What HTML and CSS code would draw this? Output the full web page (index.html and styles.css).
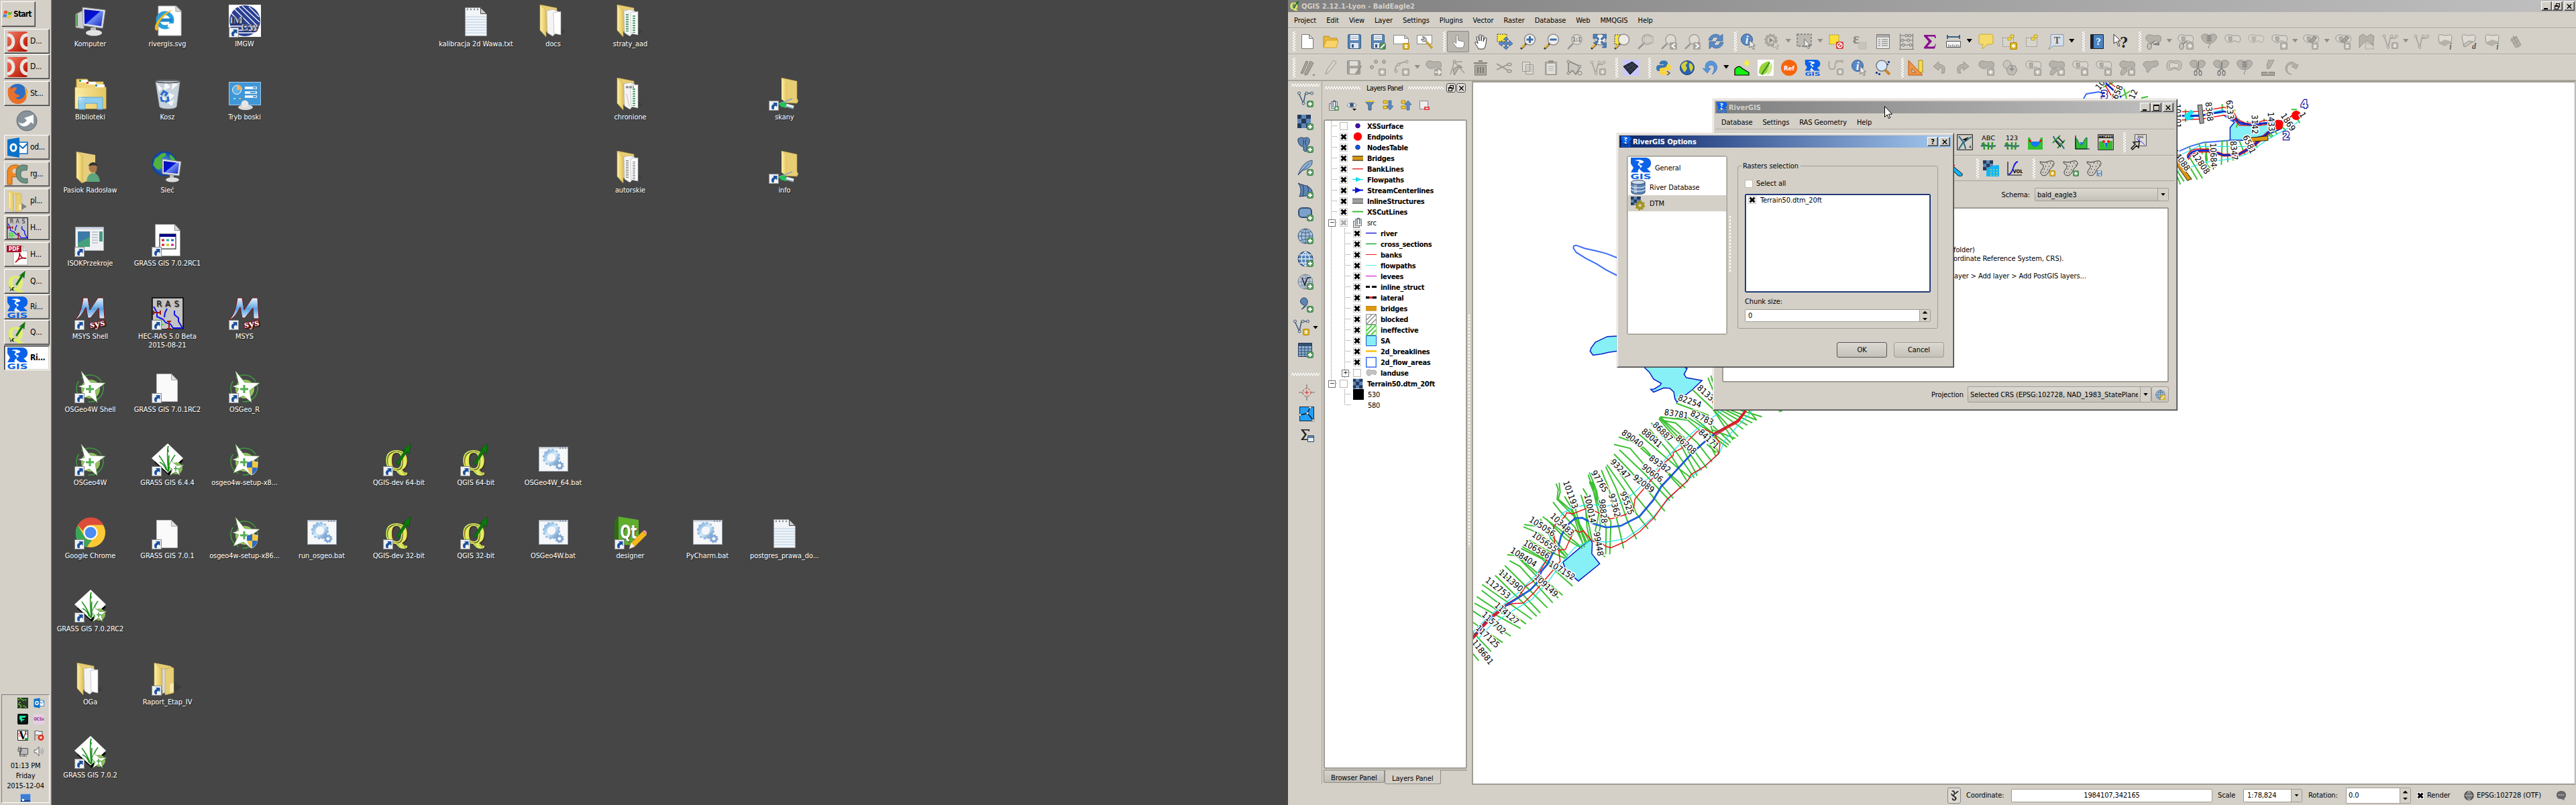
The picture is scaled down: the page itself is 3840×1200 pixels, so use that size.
FILE: index.html
```html
<!DOCTYPE html>
<html lang="en">
<head>
<meta charset="utf-8">
<title>Desktop</title>
<link rel="stylesheet" href="styles.css">
</head>
<body>
<svg class="defs" aria-hidden="true">
<defs>
<linearGradient id="gFold" x1="0" x2="1"><stop offset="0" stop-color="#fdf0a8"/><stop offset="1" stop-color="#e3c45c"/></linearGradient>
<linearGradient id="gScr" x1="0" y1="0" x2="1" y2="1"><stop offset="0" stop-color="#0a14a0"/><stop offset=".45" stop-color="#0010d8"/><stop offset=".5" stop-color="#6f8cf0"/><stop offset="1" stop-color="#1426c8"/></linearGradient>
<linearGradient id="gRed" x1="0" y1="0" x2="1" y2="1"><stop offset="0" stop-color="#ee7a6a"/><stop offset=".5" stop-color="#d8452c"/><stop offset="1" stop-color="#a80c00"/></linearGradient>
<linearGradient id="gM" x1="0" y1="0" x2="0" y2="1"><stop offset="0" stop-color="#e8f4ff"/><stop offset=".5" stop-color="#5aa0e0"/><stop offset="1" stop-color="#e8f4ff"/></linearGradient>
<radialGradient id="gGlobe"><stop offset="0" stop-color="#5ab0f8"/><stop offset="1" stop-color="#0a3ca0"/></radialGradient>
<linearGradient id="gGear" x1="0" y1="0" x2="1" y2="1"><stop offset="0" stop-color="#7fb2e0"/><stop offset=".5" stop-color="#d6ecfa"/><stop offset="1" stop-color="#6f9ccc"/></linearGradient>
</defs>

<!-- shared badges -->
<symbol id="bStar" viewBox="0 0 10 10"><rect x=".5" y=".5" width="9" height="9" rx="1" fill="#d8ac1c" stroke="#b48c10"/><path d="M5 2v6M2.4 3.5l5.2 3M2.4 6.5l5.2-3" stroke="#fff" stroke-width="1.3"/></symbol>
<symbol id="bPlus" viewBox="0 0 10 10"><rect x=".5" y=".5" width="9" height="9" rx="2" fill="#5a9c62" stroke="#3f8048"/><path d="M5 2v6M2 5h6" stroke="#fff" stroke-width="1.8"/></symbol>
<symbol id="bGrey" viewBox="0 0 10 10"><rect x=".5" y=".5" width="9" height="9" rx="1" fill="#b3b0a9" stroke="#a3a099"/><path d="M5 2v6M2.4 3.5l5.2 3M2.4 6.5l5.2-3" stroke="#f4f3f0" stroke-width="1.2"/></symbol>
<symbol id="bGreyX" viewBox="0 0 10 10"><rect x=".5" y=".5" width="9" height="9" rx="1" fill="#b3b0a9" stroke="#a3a099"/><path d="M3 3l4 4M7 3L3 7" stroke="#f4f3f0" stroke-width="1.6"/></symbol>
<symbol id="short" viewBox="0 0 15 15"><rect x=".5" y=".5" width="14" height="14" fill="#eef1f4" stroke="#8a8a8a"/><path d="M5 13C3 9 4 6 8 5L6 3h6.500v6.500L10.500 7.500C8 8.500 7 10 8 13z" fill="#1a4f9c"/></symbol>
<symbol id="river" viewBox="0 0 32 32"><path d="M1 0h22c10 0 11 14 2 16l6 6H1l4-7-4-6z" fill="#0a62e8"/><path d="M7 4c8-2 15 1 13 3s-8 1-6 3 6 2 3 4-5 3 3 8h-8c-2-4 3-5 3-8s-5-2-3-5 4-3-5-5z" fill="#fff"/><text x="16" y="32" font-size="10.500" text-anchor="middle" textLength="31" lengthAdjust="spacingAndGlyphs" class="logo" fill="#0a62e8">GIS</text></symbol>
<symbol id="qgis" viewBox="0 0 48 48"><text x="20" y="40" font-size="45" text-anchor="middle" textLength="34" lengthAdjust="spacingAndGlyphs" class="serif" fill="#e2f060" stroke="#e2f060" stroke-width="1.500">Q</text><path d="M20 30L33 9l-5 2L41 0l-2 16-3-4-13 20z" fill="#0a7a0a" stroke="#044a04" stroke-width=".6"/></symbol>
<symbol id="pole" viewBox="0 0 10 10"><path d="M0 2c3 2 3 3 4 6l2-4 4-1-3 3 2 4-4-2-3 2 1-4z" fill="#1a3a10"/></symbol>

<!-- desktop icons, 48px -->
<symbol id="dPc" viewBox="0 0 48 48"><path d="M2 14l12-6v28L2 34z" fill="#c9cdd0" stroke="#888"/><path d="M4 14v18" stroke="#3a3" stroke-width="2"/><path d="M12 4l34 4-4 27-29-4z" fill="#e4e6ea" stroke="#999"/><path d="M14.500 7l28.500 3-3 22-25-3.500z" fill="url(#gScr)"/><path d="M24 34h8v6h-8z" fill="#bbb"/><ellipse cx="29" cy="42" rx="12" ry="4.500" fill="#e2e2e2"/></symbol>
<symbol id="dIe" viewBox="0 0 48 48"><path d="M10 2h27l7 7v37H10z" fill="#fff" stroke="#bbb"/><path d="M36 2v8h8z" fill="#ddd" stroke="#999"/><circle cx="20" cy="23" r="10.500" fill="none" stroke="#2b9fdc" stroke-width="6"/><path d="M12 23h19" stroke="#1b86c8" stroke-width="5"/><path d="M24 28h10v6H24z" fill="#fff"/><path d="M6 38C0 30 20 8 32 8c-8 3-25 18-22 28-1 2-3 3-4 2z" fill="#f2b81c"/></symbol>
<symbol id="dImgw" viewBox="0 0 48 48"><path fill="#fff" d="M0 0h48v48H0z"/><circle cx="24" cy="24" r="23" fill="#2a3f92"/><path d="M8 6l34 34M14 3l30 30M20 2l26 24M3 12l22 22M30 3l15 15" stroke="#fff" stroke-width="1.300"/><path d="M3 32h43M5 38h38M9 42h30" stroke="#fff" stroke-width="1.500"/><text x="1" y="28" font-size="15" class="serif" fill="#fff" stroke="#2a3f92" stroke-width=".4">IM</text><text x="18" y="39" font-size="15" class="serif" fill="#fff" stroke="#2a3f92" stroke-width=".4">GW</text></symbol>
<symbol id="dLib" viewBox="0 0 48 48"><path d="M3 2h16l2 4h22v8h4v32H1V14h2z" fill="#efd277" stroke="#c9a545"/><path d="M7 3h12l2 4H7zM19 6h12l2 4H19zM31 10h14v4H31z" fill="#fff"/><path d="M7 3h3v3H7z" fill="#3a3"/><path d="M18 6h3v3h-3z" fill="#d33"/><path d="M31 10h3v3h-3z" fill="#38c"/><path d="M1 15h46v31H1z" fill="url(#gFold)" opacity=".85"/><path d="M6 29h36v18h-8V38H16v9H6z" fill="#8fcdf0" stroke="#5aa4d0"/><path d="M8 24v14M1 31h14M4 27l9 9M13 26l-9 9" stroke="#fff" opacity=".6"/></symbol>
<symbol id="dBin" viewBox="0 0 48 48"><path d="M6 5h36l-5 38c-2 4-23 4-25 0z" fill="#c7d2dc" stroke="#aab4bc"/><path d="M8 8l8 8-5 5zM20 5l8 9-10 5zM31 6l8 4-9 8zM13 26l9 5-8 6zM25 22l9 4-7 8zM22 36l12-3-4 9z" fill="#fff" opacity=".8"/><path d="M14 26l4-6 5 3-3 4M24 28l1 6-5 2M14 28l1 6 4 1" stroke="#2f6cd0" stroke-width="3.200" fill="none"/><ellipse cx="24" cy="5" rx="18" ry="2.500" fill="none" stroke="#555" stroke-width="1.500"/></symbol>
<symbol id="dPanel" viewBox="0 0 48 48"><rect x=".5" y="6.500" width="47" height="34" fill="#3f97d8" stroke="#9cc8ea"/><circle cx="12" cy="18" r="6.500" fill="#5cb0e4" stroke="#fff"/><path d="M12 18V10a8 8 0 0 1 8 8z" fill="#f6b064"/><path d="M24 15h18M24 22h18M24 28h18" stroke="#fff" stroke-width="3.500"/><path d="M36 15h5M32 22h8M36 28h5" stroke="#2b7fc0" stroke-width="1.500"/><path d="M7 31h3" stroke="#7fe" stroke-width="2"/><path d="M15 31h3" stroke="#fa6" stroke-width="2"/><ellipse cx="25" cy="44" rx="11" ry="4" fill="#d9d9d9"/><circle cx="24" cy="39" r="5.500" fill="#e6e6e6"/></symbol>
<symbol id="dUser" viewBox="0 0 48 48"><path d="M3 1l28 5v34l-20 8L3 40z" fill="#e6ce7c"/><path d="M3 1l9 6v41L3 40z" fill="url(#gFold)" stroke="#c9a545" stroke-width=".6"/><path d="M18 46c1-11 6-13 10-13s9 3 10 13z" fill="#5da57c"/><circle cx="28" cy="26" r="6.500" fill="#a8784c"/><path d="M21 23c1-8 13-8 14 0-3-2-10-2-14 0z" fill="#333"/><path d="M34 24v8" stroke="#444" stroke-width="1.500"/></symbol>
<symbol id="dNet" viewBox="0 0 48 48"><circle cx="19" cy="19" r="18.500" fill="url(#gGlobe)"/><path d="M5 11c8-3 8-9 15-8 6 5-6 6-6 11s5 7 0 12-9-2-12-5zM27 5c5 3 9 7 9 12-5 0-10-5-9-12z" fill="#4fb33c"/><path d="M16 12l28 4-3 21-25-3z" fill="#e4e6ea" stroke="#888"/><path d="M18 15l23 3-2 16-21-2z" fill="url(#gScr)"/><path d="M27 36h6v5h-6z" fill="#bbb"/><ellipse cx="31" cy="43" rx="10" ry="3.500" fill="#ddd"/></symbol>
<symbol id="dApp" viewBox="0 0 48 48"><rect x="1.500" y="4.500" width="42" height="35" fill="#eef0f2" stroke="#9aa4ae"/><path fill="#cfd8e4" d="M2 5h41v3H2z"/><path d="M5 11h18v23H5z" fill="#45a17a"/><path d="M5 11h18v8L5 28z" fill="#3d7aa8"/><path d="M26 12h9M26 16h9M26 20h9M26 24h9M26 28h9" stroke="#b9bfc6" stroke-width="1.500"/><path d="M37 11h5v15h-5z" fill="#4a9a88"/></symbol>
<symbol id="dExe" viewBox="0 0 48 48"><path d="M5.500.5h29l8 9v38h-37z" fill="#fff" stroke="#999"/><path d="M34.500.5v9h8z" fill="#ddd" stroke="#888"/><rect x="12" y="15" width="24" height="22" fill="#fff" stroke="#000"/><path fill="#000088" d="M12 15h24v4H12z"/><path d="M15 24h4M15 31h4" stroke="#c22" stroke-width="3"/><path d="M22 24h4" stroke="#2aa" stroke-width="3"/><path d="M29 24h4" stroke="#26c" stroke-width="3"/><path d="M22 31h4" stroke="#cb2" stroke-width="3"/><path d="M29 31h4" stroke="#c28" stroke-width="3"/></symbol>
<symbol id="dMsys" viewBox="0 0 48 48"><path d="M0 34c8-6 11-20 13-33h7l3 18L35 1h8l2 31h-8l-1-16-12 15h-4l-3-16C12 25 8 31 0 34z" fill="url(#gM)" stroke="#7a1010" stroke-width="1"/><text x="23" y="44" font-size="15" textLength="22" lengthAdjust="spacingAndGlyphs" class="serif" fill="#fff" stroke="#8a0c0c" stroke-width="2" paint-order="stroke" transform="rotate(-10 34 40)">sys</text></symbol>
<symbol id="dRas" viewBox="0 0 48 48"><rect x="1" y="1" width="46" height="47" fill="#c4c4c4" stroke="#000" stroke-width="1.500"/><text x="24" y="13.500" font-size="13" text-anchor="middle" textLength="34" class="sans" fill="#222">RAS</text><path d="M3 14l5 9v6l9 4 4 5 7 2 4 6h14l-6-10v-5l-6-5v-6M23 17l-3 6-1 7" fill="none" stroke="#1414e8" stroke-width="2"/><path d="M3 23h10M3 20v6M13 20v6M26 36v11M23 36h6M23 47h6" stroke="#a01414" stroke-width="2"/><path d="M4 36h12M4 41h14M7 33v13M12 33v13" stroke="#14e814" stroke-width="1.500"/></symbol>
<symbol id="dGeo" viewBox="0 0 48 48"><circle cx="23" cy="27" r="20" fill="none" stroke="#3f9a3f" stroke-width="1.500" stroke-dasharray="34 6"/><circle cx="24" cy="28" r="14" fill="#92c45c"/><path d="M10 1l14 17 22 1-15 11 3 18-12-10-15 6 8-17L6 24l9-3z" fill="#fff" stroke="#6a9c50" stroke-width=".7"/><path d="M23 22v12M17 28h12" stroke="#4fae4f" stroke-width="3"/></symbol>
<symbol id="dDoc" viewBox="0 0 48 48"><path d="M7.500 5.500h22l9 9v32h-31z" fill="#fafafa" stroke="#bbb"/><path d="M29.500 5.500v9h9z" fill="#ddd" stroke="#aaa"/></symbol>
<symbol id="dGrass" viewBox="0 0 48 48"><path d="M24 5l23 21-21 22L4 28z" fill="#0a0a0a"/><path d="M24 0l23 22-23 22L0 22z" fill="#fff"/><path d="M25 42C24 26 22 14 25 4M24 42C20 30 14 22 11 18M22 40c-3-8-6-10-10-12M25 42c2-12 6-20 10-25M26 40c0-10-1-18 0-22" fill="none" stroke="#1f8f1f" stroke-width="1.600"/><path d="M24 3l2 10-3-1z" fill="#1f8f1f"/><circle cx="37" cy="37" r="9" fill="#8fbf5a"/><path d="M29 26l9 7 10-1-8 6 2 10-6-6-9 6 4-9-5-5z" fill="#fff" stroke="#4b8a40" stroke-width=".7"/><path d="M36 34v7M33 37.500h7" stroke="#3a9a3a" stroke-width="1.500"/></symbol>
<symbol id="dShield" viewBox="0 0 18 22"><path d="M1 3c3 0 5-1 8-3 3 2 5 3 8 3 0 9-1 15-8 19C2 18 1 12 1 3z" fill="#f6c838" stroke="#dfe3ea"/><path d="M9 1v10H1c0-3 0-5 .4-8C4 3 6.500 2 9 1zM9 11h7.500C16 16 13 19.500 9 21.500z" fill="#2c6ac8"/></symbol>
<symbol id="dChrome" viewBox="0 0 48 48"><circle cx="24" cy="24" r="22" fill="#fcc934"/><path d="M5 13C14-3 36-2 43 12.500H24c-6 0-10 4-11 9z" fill="#dd4b3a"/><path d="M5 13l10 17c2 4 6 5.500 11 5L18 46C2 42-2 26 5 13z" fill="#3aa757"/><circle cx="24" cy="24" r="10.500" fill="#fff"/><circle cx="24" cy="24" r="8.500" fill="#4b8bf4"/></symbol>
<symbol id="dBat" viewBox="0 0 48 48"><rect x="2.500" y="5.500" width="43" height="36" fill="#f6f7f9" stroke="#9aa4ae"/><path fill="#d3dae6" d="M3 6h42v2H3z"/><path d="M33 7h10" stroke="#456" stroke-width="1" stroke-dasharray="2 2"/><circle cx="21" cy="21" r="9" fill="none" stroke="url(#gGear)" stroke-width="5.500"/><circle cx="21" cy="21" r="12" fill="none" stroke="#8db4dc" stroke-width="2.200" stroke-dasharray="3 3.300"/><circle cx="33" cy="33" r="4" fill="none" stroke="#7ea6d4" stroke-width="3"/><circle cx="33" cy="33" r="6" fill="none" stroke="#7ea6d4" stroke-width="1.500" stroke-dasharray="2 2.700"/></symbol>
<symbol id="dFold" viewBox="0 0 48 48"><path d="M34 34l8 6-10 6z" fill="#333" opacity=".5"/><path d="M4 0l25 5v35H12z" fill="#e7cd74" stroke="#c7a74c" stroke-width=".6"/><path d="M14 9l9-2 8 3v28l-8 9-8-5z" fill="#f4f4f4" stroke="#aaa" stroke-width=".6"/><path d="M24 12l11-2v35l-10-2z" fill="#fff" stroke="#aaa" stroke-width=".6"/><path d="M4 0l9 9v39L4 38z" fill="url(#gFold)" stroke="#c7a74c" stroke-width=".6"/></symbol>
<symbol id="dFold2" viewBox="0 0 48 48"><path d="M33 28l12 8-14 9z" fill="#333" opacity=".5"/><path d="M4 0l25 5v35H12z" fill="#e7cd74"/><path d="M16 9h8v34l-8 3z" fill="#ddd" stroke="#999" stroke-width=".6"/><path d="M20 10l9-4 4 2v37l-13 3z" fill="#e7cd74" stroke="#b99a40" stroke-width=".6"/><path d="M4 0l11 9v39L4 38z" fill="url(#gFold)" stroke="#c7a74c" stroke-width=".6"/><path d="M27 32l6-2v13l-6 2z" fill="#f6e8a8"/></symbol>
<symbol id="dTxt" viewBox="0 0 48 48"><path d="M7.500 4.500h23l9 9v33h-32z" fill="#f1f5fa" stroke="#999"/><path d="M8 18h31M8 22h31M8 26h31M8 30h31M8 34h31M8 38h31M8 42h31" stroke="#b5cde0"/><path d="M10 7h19" stroke="#888" stroke-width="2.500" stroke-dasharray="2 3"/><path d="M30.500 4.500v9h9z" fill="#ccc" stroke="#444"/></symbol>
<symbol id="dShare" viewBox="0 0 48 48"><path d="M19 0l23 5v26l2 3-2 4-18-1z" fill="#e7cd74" stroke="#b99a40" stroke-width=".6"/><path d="M19 0l8 8v30l-8-6z" fill="url(#gFold)"/><path d="M15 39l8-3 12-5" stroke="#9ab" stroke-width="2"/><path d="M15 38l8-2 3 3v6l-8-2z" fill="#1fc45c"/><path d="M26 41l11 3" stroke="#e8eef2" stroke-width="5"/><path d="M26 43l11 3" stroke="#6b8a90" stroke-width="1.500"/></symbol>
<symbol id="dQt" viewBox="0 0 48 48"><path d="M0 8l6-8 30 5v33l-8 5-24-2-4-7z" fill="#5fae2e"/><path d="M0 8l6-8v40l-6-7z" fill="#2f6a14"/><text x="21" y="33" font-size="28" text-anchor="middle" textLength="25" lengthAdjust="spacingAndGlyphs" class="logo" fill="#fff">Qt</text><path d="M22 48l3-9 17-17 6 5-17 17z" fill="#f4b81c" stroke="#b57a10" stroke-width=".6"/><path d="M22 48l3-9 5 6z" fill="#eee"/><path d="M42 22l3-2 4 4-1 3z" fill="#e49a9a"/></symbol>

<!-- taskbar icons, 32px -->
<symbol id="tFlag" viewBox="0 0 16 16"><path d="M2 3c2-1.500 4-1.500 6 0L7 7.500C5 6 3 6 1 7z" fill="#e8582a"/><path d="M9 3.500c2 1.200 4 1.200 6 0L14 8c-2 1-4 1-6 0z" fill="#6cb52c"/><path d="M1 8.500c2-1.500 4-1 5.700 0L5.700 13c-2-1.500-4-1-5.700 0z" fill="#3c8ae0"/><path d="M7.700 9c2 1.500 4 1.500 6 .4L12.500 14c-2 1-4 1-6-.3z" fill="#f6c52c"/></symbol>
<symbol id="tD" viewBox="0 0 32 32"><rect x="1" y="1" width="30" height="30" rx="3" fill="url(#gRed)"/><path d="M1 6c12 0 12 20 0 20M31 6c-12 0-12 20 0 20" fill="none" stroke="#e9e6e2" stroke-width="5"/></symbol>
<symbol id="tFox" viewBox="0 0 32 32"><circle cx="16" cy="15" r="14" fill="#2a6fc8"/><path d="M2 8C0 24 8 31 17 31c9 0 15-8 14-19-1-3-3-6-4-6 3 12-3 18-9 18-4 0-5-3-5-3 4 1 6-1 6-3-4-1-8-3-8-6l3-1c-1-3 2-4 2-4-4-2-7-1-9 2-1-2-1-4-1-4C4 6 3 7 2 8z" fill="#e8702a"/><path d="M26 6c5 5 6 12 3 18 1-6 0-12-3-18z" fill="#f8d03a"/></symbol>
<symbol id="tSync" viewBox="0 0 32 32"><circle cx="16" cy="16" r="15" fill="#87929a" stroke="#5f6a70"/><path d="M3 18c4 3 10 3 13-3l-4-3 14-5v14l-4-3c-5 8-14 9-19 0z" fill="#fff"/></symbol>
<symbol id="tOut" viewBox="0 0 32 32"><path d="M16 8h15v17H16z" fill="#fff" stroke="#0a6ac0" stroke-width="1.500"/><path d="M17 11l7 6 7-7" fill="none" stroke="#0a6ac0" stroke-width="2"/><path d="M1 4l18-3v30L1 28z" fill="#0a72c8"/><ellipse cx="10" cy="16" rx="4" ry="5" fill="none" stroke="#fff" stroke-width="3"/></symbol>
<symbol id="tPy" viewBox="0 0 32 32"><path d="M1 31V13C1 5 7 1 15 2c9 1 7 18-3 18l-4-1v12z" fill="#f08a24" stroke="#b05a10"/><circle cx="12" cy="11" r="3.500" fill="#d4d0c8"/><path d="M31 3C20-1 13 6 14 14c0 10 7 16 17 15v-7c-8 2-11-3-10-8 0-3 3-5 9-4z" fill="#6f9080" stroke="#4a6a5a"/></symbol>
<symbol id="tPdf" viewBox="0 0 32 32"><path d="M10 3h14l7 7v21H10z" fill="#fff" stroke="#aaa"/><path d="M24 3v7h7" fill="#ddd" stroke="#999"/><path d="M13 27c4-2 7-9 6-14 1 6 5 9 10 8-6-1-12 1-16 6z" fill="none" stroke="#b8121e" stroke-width="1.800"/><path fill="#a8101c" d="M0 2h22v10H0z"/><text x="11" y="10" font-size="8" text-anchor="middle" class="logo" fill="#fff">PDF</text></symbol>

<!-- toolbar icons, 24px -->
<symbol id="new" viewBox="0 0 24 24"><path d="M3.500 1.500h11l6 6v15h-17z" fill="#fff" stroke="#777"/><path d="M14.500 1.500v6h6z" fill="#ddd" stroke="#777"/></symbol>
<symbol id="open" viewBox="0 0 24 24"><path d="M1 20V4h8l2 3h10v4" fill="#e8b83c" stroke="#c08c1c"/><path d="M1 21L5 10h18l-3 11z" fill="#f8d468" stroke="#d0a030"/></symbol>
<symbol id="save" viewBox="0 0 24 24"><rect x="2.500" y="1.500" width="19" height="21" rx="1.500" fill="#5a86b8" stroke="#34587f"/><path fill="#eef2f6" d="M6 2h12v8H6z"/><path d="M7 5h10M7 7.500h10" stroke="#9ab"/><path fill="#dfe6ee" d="M6 14h12v8H6z"/><path fill="#34587f" d="M8 16h3v5H8z"/></symbol>
<symbol id="saveg" viewBox="0 0 24 24"><rect x="1.500" y="1.500" width="19" height="20" rx="1.500" fill="#a7a49d" stroke="#8f8c85"/><path fill="#e0ded9" d="M5 2h12v7H5zM5 13h12v8H5z"/><path d="M14 22l8-13" stroke="#99968f" stroke-width="3"/></symbol>
<symbol id="saveas" viewBox="0 0 24 24"><use href="#save"/><rect x="14" y="14" width="10" height="10" rx="2" fill="#4f8a58"/><path d="M16 22l6-6" stroke="#fff" stroke-width="2"/></symbol>
<symbol id="comp" viewBox="0 0 24 24"><path d="M.5 2.500h16l6 5v8H.5z" fill="#fff" stroke="#888"/><path d="M16.500 2.500v5h6z" fill="#ddd" stroke="#888"/><use href="#bStar" x="14" y="14" width="10" height="10"/></symbol>
<symbol id="compm" viewBox="0 0 24 24"><path d="M.5 2.500h22v13H.5z" fill="#fff" stroke="#888"/><path d="M14 12l9 10" stroke="#c9a13a" stroke-width="3.500"/><path d="M8 5c4-1 7 2 6 6l-3 1c-4 0-4-3-4-4l3 1 1-2z" fill="#ccc" stroke="#555"/></symbol>
<symbol id="touch" viewBox="0 0 24 24"><path d="M10 22l-7-9 2-1 4 3V3c0-2 3-2 3 0v7l9 2c2 1 1 6-1 10z" fill="#fff" stroke="#777"/></symbol>
<symbol id="pan" viewBox="0 0 24 24"><path d="M8 23c-2-5-6-8-5-10 2-1 3 1 4 2L5 6c0-2 2-2 3 0l1 5V3c0-2 3-2 3 0v8l1-7c1-2 3-1 3 1l-1 7 2-5c1-1 3-1 3 1-1 6-1 11-4 15z" fill="#fff" stroke="#333"/></symbol>
<symbol id="pansel" viewBox="0 0 24 24"><path d="M1 1h14v11H1z" fill="#fbe63c" stroke="#333" stroke-dasharray="2 1.500"/><path d="M14 5l4 4h-3v4h4v-3l5 5-5 4v-3h-4v4h3l-4 4-4-4h3v-4H8v3l-5-4 5-5v3h5V9h-3z" fill="#5b8ccc" stroke="#31568c" stroke-width=".8"/></symbol>
<symbol id="mag" viewBox="0 0 24 24"><path d="M9 15l-8 8" stroke="#333" stroke-width="3"/><path d="M7 16l-5 5" stroke="#e8b83c" stroke-width="3"/><circle cx="14.500" cy="9" r="8" fill="#f0efec" stroke="#8d8d8d" stroke-width="1.500"/></symbol>
<symbol id="magg" viewBox="0 0 24 24"><path d="M9 15l-8 8" stroke="#999" stroke-width="2.500"/><circle cx="14.500" cy="9" r="7.500" fill="#dedbd5" stroke="#a5a29b" stroke-width="1.500"/></symbol>
<symbol id="zin" viewBox="0 0 24 24"><use href="#mag"/><path d="M14.500 4v10M9.500 9h10" stroke="#3c6cac" stroke-width="3"/></symbol>
<symbol id="zout" viewBox="0 0 24 24"><use href="#mag"/><path d="M9.500 9h10" stroke="#3c6cac" stroke-width="3"/></symbol>
<symbol id="z11" viewBox="0 0 24 24"><use href="#magg"/><text x="14.500" y="12" font-size="8" text-anchor="middle" class="logo" fill="#777">1:1</text></symbol>
<symbol id="zfull" viewBox="0 0 24 24"><use href="#mag"/><path d="M4 1h7L8.500 3.500 13 8l-2 2-4-4-3 2zM24 1h-7l2.500 2.500L15 8l2 2 4-4 3 2zM24 21h-7l2.500-2.500L15 13l2-2 4 4 3-2zM4 14l3-1 3-3 2 2-4 4z" fill="#4f7fb8" stroke="#2f5484" stroke-width=".7"/></symbol>
<symbol id="zsel" viewBox="0 0 24 24"><path d="M1 2h14v14H1z" fill="#fbe63c" stroke="#333" stroke-dasharray="2 1.500"/><use href="#mag" opacity=".92"/></symbol>
<symbol id="zlay" viewBox="0 0 24 24"><use href="#magg"/><path d="M10 4h14v10H10z" fill="#ccc9c2" stroke="#a5a29b" opacity=".8"/></symbol>
<symbol id="zlast" viewBox="0 0 24 24"><use href="#magg"/><rect x="13" y="13" width="11" height="11" rx="1" fill="#a8a59e"/><path d="M21 15l-4.500 3.500L21 22" fill="none" stroke="#fff" stroke-width="2"/></symbol>
<symbol id="znext" viewBox="0 0 24 24"><use href="#magg"/><rect x="13" y="13" width="11" height="11" rx="1" fill="#a8a59e"/><path d="M16.500 15l4.500 3.500-4.500 3.500" fill="none" stroke="#fff" stroke-width="2"/></symbol>
<symbol id="refresh" viewBox="0 0 24 24"><path d="M1 10C3 0 15-1 18 4l4-3v10H12l3-4c-3-3-8-2-9 3zM23 13c-2 10-14 11-17 6l-4 4V12h10l-3 4c3 3 8 2 9-3z" fill="#5a8ac4" stroke="#375f95" stroke-width=".7"/></symbol>
<symbol id="cur" viewBox="0 0 14 18"><path d="M1 0l11 11H7.500l3 6-2.500 1-3-6L1 15z" fill="#e9e9e6" stroke="#333" stroke-width=".8"/></symbol>
<symbol id="ident" viewBox="0 0 24 24"><circle cx="9" cy="9" r="8.500" fill="#5a88c4" stroke="#375f95"/><text x="9" y="15" font-size="17" text-anchor="middle" class="serif it" fill="#fff">i</text><use href="#cur" x="12" y="9" width="11" height="15"/></symbol>
<symbol id="act" viewBox="0 0 24 24"><circle cx="10" cy="10" r="7" fill="none" stroke="#aaa79f" stroke-width="3.500"/><circle cx="10" cy="10" r="9" fill="none" stroke="#aaa79f" stroke-width="2" stroke-dasharray="3 2.600"/><path d="M7.500 6l6 4-6 4z" fill="#8f8c85"/><use href="#cur" x="13" y="10" width="10" height="14" opacity=".6"/></symbol>
<symbol id="sel" viewBox="0 0 24 24"><path d="M1 1h21v18H1z" fill="#bdbab3" stroke="#777" stroke-dasharray="3 2" stroke-width="1.500"/><use href="#cur" x="11" y="8" width="11" height="15"/></symbol>
<symbol id="desel" viewBox="0 0 24 24"><path d="M2 2h14v14H2z" fill="#fbe03c" stroke="#97861c" stroke-dasharray="2 1.500"/><rect x="12" y="12" width="11" height="11" rx="2" fill="#d8383a"/><circle cx="17.500" cy="17.500" r="3.500" fill="none" stroke="#fff" stroke-width="1.500"/><path d="M15 20l5-5" stroke="#fff" stroke-width="1.500"/></symbol>
<symbol id="eps" viewBox="0 0 24 24"><text x="7" y="15" font-size="23" text-anchor="middle" class="serif" fill="#8a8780">ε</text><path d="M11 13h11v10H11z" fill="#c8c5be" stroke="#aaa79f" stroke-dasharray="1.500 1.500"/></symbol>
<symbol id="table" viewBox="0 0 24 24"><path d="M2.500 1.500h19v21h-19z" fill="#e8e7e4" stroke="#777"/><path fill="#aaa" d="M3 2h18v4H3z"/><path d="M5 9h3M10 9h9M5 12h3M10 12h9M5 15h3M10 15h9M5 18h3M10 18h9" stroke="#777"/></symbol>
<symbol id="abac" viewBox="0 0 24 24"><path d="M2.500 0v24M21.500 0v24M1 23.500h22M2 3h20M2 10h20M2 17h20" stroke="#777" fill="none"/><g fill="#ccc" stroke="#777"><circle cx="12" cy="3" r="2"/><circle cx="17" cy="3" r="2"/><circle cx="6" cy="10" r="2"/><circle cx="15" cy="10" r="2"/><circle cx="7" cy="17" r="2"/><circle cx="18" cy="17" r="2"/></g></symbol>
<symbol id="sigma" viewBox="0 0 24 24"><path d="M3 2h17l1 5h-1.500C19 4 17 4.500 14 4.500H8l7 7-7 8h7c4 0 4-1 5-4H21l-2 7H3v-2l7-8.500L3 4z" fill="#86108c"/></symbol>
<symbol id="meas" viewBox="0 0 24 24"><path d="M3 5h18M3 2v6M21 2v6" stroke="#3a5f86" stroke-width="2"/><path d="M1.500 11.500h21v9h-21z" fill="#f4f4f4" stroke="#555"/><path d="M5 20v-4M8 20v-3M11 20v-4M14 20v-3M17 20v-4M20 20v-3" stroke="#555"/></symbol>
<symbol id="tip" viewBox="0 0 24 24"><path d="M4 1h16q3 0 3 3v9q0 3-3 3h-5l-8 7 1-7H5q-3 0-3-3V4q0-3 2-3z" fill="#f5db6c" stroke="#c9a838"/></symbol>
<symbol id="bm" viewBox="0 0 24 24"><path d="M2.500 6.500h16v13h-16z" fill="#d8d5ce" stroke="#555" stroke-dasharray="1 2"/><path d="M14 2h5v4h-4v4h-5V6h4z" fill="#f6dc3c" stroke="#b0901c" stroke-width=".8"/></symbol>
<symbol id="bmn" viewBox="0 0 24 24"><use href="#bm"/><use href="#bStar" x="13" y="13" width="11" height="11"/></symbol>
<symbol id="txt" viewBox="0 0 24 24"><path d="M4 1.500h19v17H8l-7 5 3-6z" fill="#d6e0ea" stroke="#8a98a6"/><text x="13.500" y="15" font-size="14" text-anchor="middle" class="serif" fill="#555">T</text></symbol>
<symbol id="help" viewBox="0 0 24 24"><path fill="#4a84c4" stroke="#222" d="M2.500 1.500h19v21h-19z"/><path fill="#223" d="M3 2h4v20H3z"/><text x="14" y="17" font-size="15" text-anchor="middle" class="serif" fill="#fff">?</text></symbol>
<symbol id="what" viewBox="0 0 24 24"><path d="M2 1l10 10H8l3 7-2 1-3-7-4 3z" fill="#fff" stroke="#333"/><text x="17" y="21" font-size="22" text-anchor="middle" class="serifb" fill="#222">?</text></symbol>
<symbol id="blob" viewBox="0 0 24 24"><path d="M1 6c1-6 8-4 11-3s9-2 11 2-1 9-3 8-4-3-6-2-3 3-7 2-7-4-6-7z" fill="#b5b2ab" stroke="#96938c"/></symbol>
<symbol id="blobo" viewBox="0 0 24 24"><path d="M1 6c1-6 8-4 11-3s9-2 11 2-1 9-3 8-4-3-6-2-3 3-7 2-7-4-6-7z" fill="#d8d5ce" stroke="#96938c"/><path d="M6 5h5v6H7z" fill="#b5b2ab" stroke="#96938c"/></symbol>
<symbol id="blobs" viewBox="0 0 24 24"><use href="#blob"/><use href="#bGrey" x="13" y="13" width="11" height="11"/></symbol>
<symbol id="blobos" viewBox="0 0 24 24"><use href="#blobo"/><use href="#bGrey" x="13" y="13" width="11" height="11"/></symbol>
<symbol id="blobx" viewBox="0 0 24 24"><use href="#blobo"/><use href="#bGreyX" x="13" y="13" width="11" height="11"/></symbol>
<symbol id="blob2" viewBox="0 0 24 24"><use href="#blob"/><path d="M8 12c-5 2-8 11-4 11s5-4 8-6l-1-4z" fill="#b5b2ab" stroke="#96938c"/><use href="#bGrey" x="13" y="13" width="11" height="11"/></symbol>
<symbol id="blob2x" viewBox="0 0 24 24"><use href="#blob"/><path d="M8 12c-5 2-8 11-4 11s5-4 8-6l-1-4z" fill="#b5b2ab" stroke="#96938c"/><use href="#bGreyX" x="13" y="13" width="11" height="11"/></symbol>
<symbol id="cutp" viewBox="0 0 24 24"><use href="#blob"/><ellipse cx="6" cy="19" rx="3" ry="4.500" fill="#c7c4bd" stroke="#777"/><path d="M8 16l6-5M12 16l8-2v3z" stroke="#777" stroke-width="1.500" fill="#aaa"/></symbol>
<symbol id="cutps" viewBox="0 0 24 24"><use href="#blobo"/><ellipse cx="6" cy="19" rx="3" ry="4.500" fill="#c7c4bd" stroke="#777"/><path d="M8 16l6-5" stroke="#777" stroke-width="1.500"/><use href="#bGrey" x="13" y="13" width="11" height="11"/></symbol>
<symbol id="stitch" viewBox="0 0 24 24"><path d="M11 2C5-1-1 2 1 7s6 7 9 8zM13 2c6-3 12 0 10 5s-6 7-9 8z" fill="#b5b2ab" stroke="#96938c"/><path d="M8 4h8M8 7h8M8 10h8M12 2v13c4 3-3 3 0 7" stroke="#777" fill="none"/></symbol>
<symbol id="cut2" viewBox="0 0 24 24"><path d="M11 2C5-1-1 2 1 7s6 5 9 5zM13 2c6-3 12 0 10 5s-6 5-9 5z" fill="#b5b2ab" stroke="#96938c"/><path d="M13 3l-1 10-3 4M12 12l4 5" stroke="#777" stroke-width="1.500" fill="none"/><ellipse cx="9" cy="20" rx="2" ry="3.500" fill="none" stroke="#777" stroke-width="1.300"/><ellipse cx="16" cy="20" rx="2" ry="3.500" fill="none" stroke="#777" stroke-width="1.300"/></symbol>
<symbol id="two" viewBox="0 0 24 24"><circle cx="8" cy="7" r="6" fill="#c9c6bf" stroke="#96938c"/><path d="M12 8l8 1 3 7-5 7-8-1-3-7z" fill="#bfbcb5" stroke="#96938c"/><path d="M15 9v6M12 13l3 3 3-3" stroke="#888" fill="none" stroke-width="1.500"/></symbol>
<symbol id="over" viewBox="0 0 24 24"><use href="#blobo"/><path d="M9 12l7-8 5 2-7 8z" fill="#a5a29b" stroke="#84817a"/></symbol>
<symbol id="overs" viewBox="0 0 24 24"><use href="#over"/><use href="#bGrey" x="13" y="14" width="10" height="10"/></symbol>
<symbol id="tri" viewBox="0 0 24 24"><path d="M1 4l6-3 5 4 6-4 5 3-2 14-7-7-7 3-6 7z" fill="#b5b2ab" stroke="#96938c"/><path d="M10 15h12v8H10z" fill="none" stroke="#999" stroke-dasharray="2 1"/></symbol>
<symbol id="node" viewBox="0 0 24 24"><path d="M3 4l6 17 3-14h8" fill="none" stroke="#a19e97" stroke-width="1.500"/><g fill="#d4d0c8" stroke="#a19e97"><circle cx="3" cy="4" r="2"/><circle cx="9" cy="20" r="2"/><circle cx="14" cy="4" r="2"/><circle cx="21" cy="4" r="2"/></g></symbol>
<symbol id="nodes" viewBox="0 0 24 24"><use href="#node"/><use href="#bGrey" x="14" y="13" width="10" height="10"/></symbol>
<symbol id="topo" viewBox="0 0 24 24"><path d="M2 5c0-6 7-2 10-2s10-3 10 2l-1 8-10 5-8-4z" fill="#dedbd5" stroke="#96938c"/><path d="M3 13l9-4 9 3-9 7z" fill="#b5b2ab"/><text x="20" y="23" font-size="12" class="serif it" text-anchor="middle" fill="#666">j</text></symbol>
<symbol id="topod" viewBox="0 0 24 24"><path d="M2 5c0-6 7-2 10-2s10-3 10 2l-1 6-16 9z" fill="#dedbd5" stroke="#96938c"/><path d="M4 16l8-5 6 1-11 8z" fill="#c7c4bd" stroke="#96938c"/><text x="20" y="23" font-size="12" class="serif it" text-anchor="middle" fill="#555">d</text></symbol>
<symbol id="hatch" viewBox="0 0 24 24"><path d="M5 8l8-4 7 13-8 4zM8 3l9 18M14 5l-10 7M17 10L8 16" fill="#b5b2ab" stroke="#96938c"/></symbol>
<symbol id="pens" viewBox="0 0 24 24"><path d="M2 20L10 2l3 1-8 18zM8 20l8-18 5 3-9 17-4 1z" fill="#a5a29b" stroke="#84817a"/><path d="M19 22h5l-2.500 2.500z" fill="#84817a"/></symbol>
<symbol id="pen" viewBox="0 0 24 24"><path d="M4 22l2-7L16 1l4 3L9 18z" fill="#d9d6d0" stroke="#99968f"/></symbol>
<symbol id="dots" viewBox="0 0 24 24"><g fill="#b5b2ab" stroke="#96938c"><circle cx="9" cy="3" r="2.500"/><circle cx="21" cy="3" r="2.500"/><circle cx="3" cy="11" r="2.500"/></g><use href="#bGrey" x="13" y="13" width="11" height="11"/></symbol>
<symbol id="arc" viewBox="0 0 24 24"><path d="M3 18C1 8 10 4 20 3" fill="none" stroke="#a19e97" stroke-width="1.500"/><g fill="#d4d0c8" stroke="#96938c"><circle cx="4" cy="17" r="2"/><circle cx="8" cy="7" r="2"/><circle cx="20" cy="3" r="2"/></g><use href="#bGrey" x="13" y="13" width="11" height="11"/></symbol>
<symbol id="move" viewBox="0 0 24 24"><use href="#blob"/><rect x="13" y="13" width="11" height="11" fill="#a8a59e"/><path d="M14 18.500h8M19 15l3.500 3.500L19 22" stroke="#fff" fill="none" stroke-width="1.500"/></symbol>
<symbol id="ham" viewBox="0 0 24 24"><path d="M2 22L8 3l12 0M10 5l13 15" stroke="#a19e97" fill="none" stroke-width="1.500"/><path d="M6 14l10-6 4 4-5-1-7 12z" fill="#b5b2ab" stroke="#84817a"/><circle cx="8" cy="3" r="2" fill="#d4d0c8" stroke="#84817a"/></symbol>
<symbol id="trash" viewBox="0 0 24 24"><path d="M3.500 8h17v15h-17z" fill="#aaa79f" stroke="#807d76"/><path d="M2 5h20M9 2h6M8 11v9M12 11v9M16 11v9" stroke="#807d76" stroke-width="2"/></symbol>
<symbol id="sciss" viewBox="0 0 24 24"><path d="M1 6l17 10M1 15L18 7" stroke="#99968f" stroke-width="1.800"/><ellipse cx="20" cy="17" rx="3" ry="2" fill="none" stroke="#99968f" stroke-width="1.500"/><ellipse cx="20" cy="7" rx="3" ry="2" fill="none" stroke="#99968f" stroke-width="1.500"/></symbol>
<symbol id="copy" viewBox="0 0 24 24"><path d="M4.500 3.500h11v14h-11zM9.500 7.500h11v14h-11z" fill="#dcd9d3" stroke="#99968f"/><path d="M11 11h8M11 14h8M11 17h8" stroke="#aaa79f"/></symbol>
<symbol id="paste" viewBox="0 0 24 24"><path d="M3.500 3.500h17v19h-17z" fill="#b5b2ab" stroke="#99968f"/><path d="M6 6h12v15H6z" fill="#e4e2dd"/><path d="M8 1h8v4H8z" fill="#99968f"/><path d="M8 10h8M8 13h8M8 16h8" stroke="#aaa79f"/></symbol>
<symbol id="polye" viewBox="0 0 24 24"><path d="M3 2l18 8-7 12-5-6-6 5z" fill="#c9c6bf" stroke="#84817a" stroke-width="1.500"/><g fill="#d4d0c8" stroke="#84817a"><circle cx="3" cy="3" r="2"/><circle cx="20" cy="10" r="2"/><circle cx="3" cy="20" r="2"/><circle cx="20" cy="20" r="3"/></g></symbol>
<symbol id="solar" viewBox="0 0 24 24"><path fill="#c8c8ff" d="M0 0h24v24H0z"/><path d="M1 10l13-7 9 7-12 12z" fill="#2a2f3c" stroke="#10131c"/><path d="M5 8l10 9M10 5l9 8M4 14l13-8M8 18l12-9" stroke="#4c5466" stroke-width=".7"/></symbol>
<symbol id="python" viewBox="0 0 24 24"><path d="M6 5c0-5 12-5 12 0v5c0 3-8 1-10 4l-1 3H4C0 17 0 8 4 8h8V7H6z" fill="#3b77ae"/><path d="M18 19c0 5-12 5-12 0v-5c0-3 8-1 10-4l1-3h3c4 0 4 9 0 9h-8v1h6z" fill="#fbd43c"/><path d="M17 17l4 3-4 3" stroke="#555" fill="none" stroke-width="1.500"/></symbol>
<symbol id="earth" viewBox="0 0 24 24"><circle cx="12" cy="12" r="10.500" fill="#2a62b0" stroke="#1a3f78"/><path d="M3 8c3-5 7-6 9-5 2 3-3 4-2 6s3 3 1 6-3 5-5 1-3-4-3-8zM15 5c4 0 6 4 6 8-2 1-1 4-3 5-2-2-4-9-3-13z" fill="#cfd03c"/></symbol>
<symbol id="undo2" viewBox="0 0 24 24"><path d="M5 14C1 4 12-1 18 4s4 14-4 18c5-7 4-14-1-14-3 0-5 2-4 5h3L7 20 0 13z" fill="#5a96dc" stroke="#3a6fb0" stroke-width=".7"/></symbol>
<symbol id="prof" viewBox="0 0 24 24"><path d="M1 23V14c4-5 8-5 11-1l10 6v4z" fill="#14f014" stroke="#000" stroke-width="1.200"/><circle cx="19" cy="5" r="3" fill="#f8f03c"/><path d="M19 0v11M14 5h9M15 1l7 8M22 1l-7 8" stroke="#f8f03c"/></symbol>
<symbol id="leaf" viewBox="0 0 24 24"><path fill="#fff" d="M0 0h24v24H0z"/><path d="M2 20C2 8 8 4 18 2c-2 3 0 6-1 11s-6 11-12 9z" fill="#9cd03c"/><path d="M15 23c7-4 8-12 6-19-4 5-9 13-6 19z" fill="#cfe88c"/><path d="M6 22L18 4" stroke="#1f8f1f" stroke-width="2"/></symbol>
<symbol id="ref" viewBox="0 0 24 24"><circle cx="12" cy="12" r="12" fill="#f8640c"/><text x="12" y="15.500" font-size="9.500" text-anchor="middle" class="logo" fill="#fff">Ref</text></symbol>
<symbol id="snake" viewBox="0 0 24 24"><path d="M2 2c-2 8 0 14 6 12s-1-10 6-12h8" fill="none" stroke="#a19e97" stroke-width="1.500"/><circle cx="14" cy="2.500" r="1.700" fill="#d4d0c8" stroke="#96938c"/><circle cx="21" cy="2.500" r="1.700" fill="#d4d0c8" stroke="#96938c"/><use href="#bGrey" x="13" y="13" width="10" height="10"/></symbol>
<symbol id="magb" viewBox="0 0 24 24"><path d="M15 15l7 7" stroke="#c8882c" stroke-width="4"/><circle cx="10" cy="9" r="8" fill="#d7e8fa" stroke="#777" stroke-width="1.500"/><path d="M19 2h3v3h-3zM18 6h2v2h-2zM1 18h3v3H1zM5 20h3v3H5z" fill="#24489c"/></symbol>
<symbol id="rul" viewBox="0 0 24 24"><path d="M16 1h6v18h-6z" fill="#f8dc4c" stroke="#a08820"/><path d="M1 1l21 22H1zM6 13v6h6z" fill="#f09448" stroke="#b85a14" fill-rule="evenodd"/></symbol>
<symbol id="undo" viewBox="0 0 24 24"><path d="M3 10l8-7v4c8 0 11 5 8 13h-4c3-6 0-8-4-8v4z" fill="#b5b2ab" stroke="#96938c"/></symbol>
<symbol id="redo" viewBox="0 0 24 24"><path d="M21 10l-8-7v4C5 7 2 12 5 20h4c-3-6 0-8 4-8v4z" fill="#b5b2ab" stroke="#96938c"/></symbol>
<symbol id="ring" viewBox="0 0 24 24"><path d="M1 8c1-9 7-6 11-6s11-2 11 5-3 10-6 8-6-2-9 0-8 0-7-7z" fill="#c7c4bd" stroke="#96938c"/><path d="M5 8c1-5 4-4 7-3s7-1 7 3-2 5-5 4-4 0-6 1-4-2-3-5z" fill="#d9d6d0" stroke="#96938c"/></symbol>
<symbol id="resh" viewBox="0 0 24 24"><path d="M1 8C1 1 8 3 12 3s9-4 11 1-3 7-7 7-6 8-9 8c-3-3 1-6-3-7z" fill="#b5b2ab" stroke="#96938c"/></symbol>
<symbol id="tube" viewBox="0 0 24 24"><path d="M10 8L13 0h8l-6 12-4 2z" fill="#b5b2ab" stroke="#96938c"/><path d="M2.500 18.500h19v5h-19z" fill="#a5a29b" stroke="#84817a"/><path d="M10 14l2 8 2-8" fill="#d4d0c8"/></symbol>
<symbol id="rot" viewBox="0 0 24 24"><path d="M12 22C3 22 1 12 5 7s11-5 14 1l3-1-3 7-7-4 4-1c-3-4-8-3-10 1s-1 10 6 12z" fill="#b5b2ab" stroke="#96938c" stroke-width=".8"/></symbol>

<!-- left data toolbar -->
<symbol id="vLine" viewBox="0 0 24 24"><path d="M2 3l7 15 3-15h9" fill="none" stroke="#3c5a78" stroke-width="1.500"/><g fill="#d4d0c8" stroke="#3c5a78"><circle cx="2.500" cy="3" r="2"/><circle cx="9" cy="18" r="2"/><circle cx="14" cy="3" r="2"/><circle cx="21.500" cy="3" r="2"/></g></symbol>
<symbol id="check" viewBox="0 0 24 24"><path fill="#5e86b4" d="M0 1h20v20H0z"/><path fill="#24395c" d="M0 1h6v6H0zM13 1h7v6h-7zM6 7h7v7H6zM0 14h6v7H0zM13 14h7v7h-7z"/></symbol>
<symbol id="eleph" viewBox="0 0 24 24"><path d="M1 3c4-3 7-2 9-1 4-2 9-1 8 5s-3 6-4 6v8c-3 2-5 0-5-3v-4C4 16 0 8 1 3z" fill="#5e86b4" stroke="#24395c"/><path d="M9 4v8M13 4c-2 3-1 5 0 8" stroke="#24395c" fill="none"/></symbol>
<symbol id="feath" viewBox="0 0 24 24"><path d="M1 23C5 12 10 3 22 1c1 7-4 13-15 15z" fill="#8fb0d4" stroke="#34506f"/><path d="M1 23L18 5" stroke="#34506f"/></symbol>
<symbol id="sail" viewBox="0 0 24 24"><path d="M1 1c8 4 18 3 21 12v6L3 21c3-7 3-14-2-20z" fill="#5e86b4" stroke="#24395c"/><path d="M7 3c4 6 2 12 1 17M14 4c4 5 2 10 1 15" fill="none" stroke="#24395c"/></symbol>
<symbol id="ora" viewBox="0 0 24 24"><rect x="2" y="4" width="19" height="14" rx="5" fill="#7ba0cc" stroke="#34506f" stroke-width="2"/></symbol>
<symbol id="globe" viewBox="0 0 24 24"><circle cx="12" cy="12" r="11" fill="#a9c4e2" stroke="#3c5a78"/><path d="M1 12h22M12 1v22M4 5c5 3 11 3 16 0M4 19c5-3 11-3 16 0M12 1c-8 6-8 16 0 22M12 1c8 6 8 16 0 22" fill="none" stroke="#3c5a78"/></symbol>
<symbol id="globed" viewBox="0 0 24 24"><circle cx="12" cy="12" r="11" fill="#4f7fb4" stroke="#1c3454"/><path d="M1 12h22M12 1v22M3 6h18M3 18h18M12 1c-8 6-8 16 0 22M12 1c8 6 8 16 0 22" fill="none" stroke="#e4edf6" stroke-width="1.300"/></symbol>
<symbol id="comma" viewBox="0 0 24 24"><path d="M9 12C3 12 3 2 10 2s8 12-4 17c4-3 5-5 3-7z" fill="#5e86b4" stroke="#24395c"/></symbol>
<symbol id="grid" viewBox="0 0 24 24"><path fill="#8fb0d4" stroke="#24395c" d="M1.500 1.500h20v20h-20z"/><path fill="#34506f" d="M2 2h19v4H2z"/><path d="M2 10h19M2 14h19M2 18h19M6 2v19M11 2v19M16 2v19" stroke="#34506f"/></symbol>
<symbol id="plusb" viewBox="0 0 24 24"><use href="#bPlus" x="14" y="14" width="10" height="10"/></symbol>
<symbol id="cross" viewBox="0 0 24 24"><path d="M12 0v24M0 12h24" stroke="#777" stroke-width="1.200"/><circle cx="12" cy="12" r="6" fill="#d4d0c8" stroke="#b03030" stroke-dasharray="3 2"/><path d="M12 9v6M9 12h6" stroke="#d22"/></symbol>
<symbol id="topo2" viewBox="0 0 24 24"><rect x="1.500" y="1.500" width="21" height="21" fill="#20a0f8" stroke="#223"/><path d="M17 2l-4 9 9 11M1 14l12-3" fill="none" stroke="#112" stroke-width="1.500"/><g fill="#fff" stroke="#555" stroke-width=".7"><circle cx="17" cy="2.500" r="1.700"/><circle cx="13" cy="11" r="1.700"/><circle cx="2" cy="13.500" r="1.700"/><circle cx="21.500" cy="21.500" r="1.700"/></g></symbol>
<symbol id="sumt" viewBox="0 0 24 24"><path d="M3 3h13v3h-1L14 4.500H7l5 6-5 7h8l1.500-3h1L16 19H3l6-8z" fill="#222"/><path d="M13.500 12.500h9v9h-9z" fill="#e4edf6" stroke="#345"/><path fill="#5e86b4" d="M14 13h8v3h-8z"/></symbol>

<!-- RiverGIS window icons -->
<symbol id="rTopo" viewBox="0 0 24 24"><rect x=".7" y=".7" width="22.600" height="22.600" fill="#d4d0c8" stroke="#111"/><path d="M3 3c4 6 9 9 10 19M22 4L9 13 3 22" stroke="#2a6a80" stroke-width="2" fill="none"/><path d="M8 8l10-4-5 6z" fill="#111"/><text x="18" y="21" font-size="6" class="sans">4</text></symbol>
<symbol id="rXs" viewBox="0 0 24 24"><path d="M1 18c7-4 14 3 22-1" stroke="#2a6a80" stroke-width="2.500" fill="none"/><path d="M5 12l1 11M12 12v11M18 12l-1 11M2 14l5 2" stroke="#2c962c" stroke-width="2.500"/></symbol>
<symbol id="rAbc" viewBox="0 0 24 24"><use href="#rXs"/><text x="12" y="9" font-size="9.500" text-anchor="middle" textLength="20" lengthAdjust="spacingAndGlyphs" class="sans">ABC</text></symbol>
<symbol id="r123" viewBox="0 0 24 24"><use href="#rXs"/><text x="12" y="9" font-size="9.500" text-anchor="middle" textLength="18" lengthAdjust="spacingAndGlyphs" class="sans">123</text></symbol>
<symbol id="rCup" viewBox="0 0 24 24"><path d="M1 5h3l4 12h8l4-12h3v18H1z" fill="#30c030"/><path d="M5 11h14c0 10-14 10-14 0z" fill="#1478f0"/><circle cx="4" cy="10" r="2" fill="#f01414"/><circle cx="20" cy="10" r="2" fill="#f01414"/></symbol>
<symbol id="rPer" viewBox="0 0 24 24"><path d="M4 3c2 9 12 9 16 19" stroke="#2a6a80" stroke-width="2" fill="none"/><path d="M3 13L14 2M10 21L21 9" stroke="#2c962c" stroke-width="2"/><path d="M7 10l8 9M11 5l8 8" stroke="#111" stroke-width="1.500"/></symbol>
<symbol id="rProf" viewBox="0 0 24 24"><path d="M2 6c4 0 4 10 8 10s4-10 9-11v17H2z" fill="#30c030" stroke="#164"/><path d="M2 2v20h21" stroke="#111" fill="none" stroke-width="1.200"/><path d="M8 12h5l-2 6z" fill="#1478f0"/></symbol>
<symbol id="rAll" viewBox="0 0 24 24"><rect x=".7" y=".7" width="22.600" height="22.600" fill="#d4d0c8" stroke="#111"/><path d="M1 5h22" stroke="#111"/><path d="M2 11l6-1 4 10 4-10h6v13H2z" fill="#30c030"/><path d="M10 13h5l-2 8z" fill="#1464f0"/><circle cx="9" cy="11" r="2" fill="#f01414"/><circle cx="16" cy="11" r="2" fill="#f01414"/><text x="12" y="5.800" font-size="6" text-anchor="middle" textLength="21" lengthAdjust="spacingAndGlyphs" class="logo">ABC123</text></symbol>
<symbol id="rRas" viewBox="0 0 24 24"><path fill="#dedcd8" stroke="#555" d="M6.500.5h17v17h-17z"/><path d="M9 6l3 4 4 1 5 5M13 6v4" stroke="#3434e8" fill="none"/><text x="15" y="5.500" font-size="5" text-anchor="middle" class="sans">RAS</text><path d="M1 21l6-6-3-3 9-1-1 9-3-3-6 6z" fill="#d4d0c8" stroke="#111" stroke-width="1.500"/></symbol>
<symbol id="rArea" viewBox="0 0 24 24"><path fill="#5e86b4" d="M0 0h15v15H0z"/><path fill="#24395c" d="M0 0h5v5H0zM10 0h5v5h-5zM5 5h5v5H5zM0 10h5v5H0z"/><path d="M5 24V16c2-6 9-9 19-9v17z" fill="#14b4f4"/><path d="M11 14h12M11 18h12M11 22h12" stroke="#f8f03c" stroke-width="1.500" stroke-dasharray="1.500 3"/></symbol>
<symbol id="rVol" viewBox="0 0 24 24"><path d="M2 2v20h21" stroke="#111" fill="none" stroke-width="1.200"/><path d="M3 21C11 20 9 3 17 2" stroke="#1414e8" fill="none" stroke-width="1.800"/><text x="17" y="19" font-size="7.500" text-anchor="middle" class="logo">VOL</text></symbol>
<symbol id="rMesh" viewBox="0 0 24 24"><path d="M1 2l6 1c4 0 8-3 13-2 4 3 1 8-2 10s-4 9-8 11-8 0-8-4 5-6 4-10-4 0-5-6z" fill="#cfcbc3" stroke="#333"/><path d="M11 4h1M16 4h1M9 9h1M14 9h1M19 7h1M7 13h1M12 14h1M5 18h1M9 18h1" stroke="#333" stroke-width="1.300"/></symbol>
<symbol id="rSplit" viewBox="0 0 24 24"><path d="M0 3c6 2 5 7 0 8M9 10l12 10c2 4-5 5-8 1L5 13z" fill="#14b4f4" stroke="#111"/><path d="M0 12l8-8M2 15l8-8" stroke="#f01414" stroke-width="1.500"/></symbol>
<symbol id="db" viewBox="0 0 24 24"><path d="M1 4v16c0 5 22 5 22 0V4z" fill="#5a82b4" stroke="#24395c"/><path d="M1 10c0 4 22 4 22 0M1 15.500c0 4 22 4 22 0" fill="none" stroke="#dfe9f4" stroke-width="1.500"/><path d="M5 5h5v17H5z" fill="#fff" opacity=".35"/><ellipse cx="12" cy="4" rx="11" ry="3.500" fill="#cfdcec" stroke="#24395c"/></symbol>
<symbol id="dtm" viewBox="0 0 24 24"><path fill="#5e86b4" d="M0 1h16v14H0z"/><path fill="#24395c" d="M0 1h5v5H0zM10 1h6v5h-6zM5 6h5v5H5zM0 11h5v4H0z"/><circle cx="15" cy="15.500" r="6" fill="#a99a24" stroke="#7d7010"/><circle cx="15" cy="15.500" r="7.300" fill="none" stroke="#a99a24" stroke-width="2" stroke-dasharray="3 2.700"/><circle cx="15" cy="15.500" r="2" fill="#ddd"/></symbol>
<symbol id="x" viewBox="0 0 12 12"><rect x=".5" y=".5" width="11" height="11" fill="#fff" stroke="#cfccc6"/><path d="M2.500 2.700l7 6.600M9.500 2.700l-7 6.600" stroke="#000" stroke-width="3"/></symbol>
<symbol id="xg" viewBox="0 0 12 12"><rect x=".5" y=".5" width="11" height="11" fill="#fff" stroke="#cfccc6"/><path d="M2.500 2.700l7 6.600M9.500 2.700l-7 6.600" stroke="#aaa" stroke-width="3"/></symbol>
<symbol id="o" viewBox="0 0 12 12"><rect x=".5" y=".5" width="11" height="11" fill="#fdfdfc" stroke="#bdbab3"/></symbol>
<symbol id="clip" viewBox="0 0 16 16"><path d="M1.500 5.500h9v10h-9z" fill="#ddd" stroke="#777"/><path d="M4.500 2.500h9v10h-9z" fill="#eee" stroke="#777"/><path d="M7 11V4c0-4 4-4 4 0v6" fill="none" stroke="#34506f" stroke-width="1.200"/></symbol>
</svg>

<main class="screens">
<section class="left-screen">
  <aside class="taskbar">
    <button class="start"><svg><use href="#tFlag"/></svg>Start</button>
    <div class="tasks">
      <div class="task"><svg><use href="#tD"/></svg>D...</div>
      <div class="task s1"><svg><use href="#tD"/></svg>D...</div>
      <div class="task s3"><svg><use href="#tFox"/></svg>St...</div>
      <svg class="sync"><use href="#tSync"/></svg>
      <div class="task s5"><svg><use href="#tOut"/></svg>od...</div>
      <div class="task s3"><svg><use href="#tPy"/></svg>rg...</div>
      <div class="task s3"><svg><use href="#dFold2"/></svg>pl...</div>
      <div class="task s3"><svg><use href="#dRas"/></svg>H...</div>
      <div class="task s3"><svg><use href="#tPdf"/></svg>H...</div>
      <div class="task s3"><svg viewBox="0 0 32 32"><use href="#qgis" width="32" height="32"/><use href="#pole" x="3" y="21" width="9" height="9"/></svg>Q...</div>
      <div class="task s1"><svg><use href="#river"/></svg>Ri...</div>
      <div class="task s1"><svg viewBox="0 0 32 32"><use href="#qgis" width="32" height="32"/><use href="#pole" x="3" y="21" width="9" height="9"/></svg>Q...</div>
      <div class="task s1 active"><svg><use href="#river"/></svg>Ri...</div>
    </div>
    <div class="tray">
      <div class="tray-icons">
        <svg viewBox="0 0 16 16"><path fill="#2c3a2c" d="M0 0h16v16H0z"/><path d="M1 3l4-2 3 3 6-1M4 6l-2 4 4 2-2 4M9 12l5 3" stroke="#7ce83c" stroke-width="1.500" fill="none" stroke-dasharray="2 1"/></svg>
        <svg viewBox="0 0 32 32"><use href="#tOut"/></svg>
        <svg viewBox="0 0 16 16"><rect width="16" height="16" rx="2" fill="#0a1414"/><path d="M3 3h10l-2 3H7v2h4l-2 2H7v3L3 8z" fill="#1ce0a0"/></svg>
        <svg viewBox="0 0 16 16"><path fill="#e6cfe2" d="M0 0h16v16H0z"/><text x="8" y="10" font-size="6.500" text-anchor="middle" textLength="15" lengthAdjust="spacingAndGlyphs" class="logo" fill="#8c2c84">OCSs</text></svg>
        <svg viewBox="0 0 16 16"><path fill="#fff" stroke="#222" d="M.5.500h15v15H.5z"/><path d="M1 6h4M2 9h4M11 6h4" stroke="#c22"/><path fill="#2a2" d="M11 12h5v3h-5z"/><text x="8" y="14" font-size="16" text-anchor="middle" class="serifb">V</text></svg>
        <svg viewBox="0 0 16 16"><path d="M2 1v15M3 2c4-2 5 2 10 0v6c-5 2-6-2-10 0" fill="#eee" stroke="#555"/><circle cx="11" cy="11.500" r="4.500" fill="#e0301c"/><path d="M9.500 10l3 3M12.500 10l-3 3" stroke="#fff" stroke-width="1.300"/></svg>
        <svg viewBox="0 0 16 16"><path d="M4.500 3.500h11v9h-11zM7 15h7M10 13v2M2 1v3M5 1v3M1 4h5v4H1zM3.500 8v7h3" fill="#bbb" stroke="#555"/></svg>
        <svg viewBox="0 0 16 16"><path d="M1 6h3l4-5v14l-4-5H1z" fill="#f0f0f0" stroke="#666"/><path d="M10 5c2 2 2 4 0 6M12 3c3 3 3 7 0 10" fill="none" stroke="#888"/></svg>
      </div>
      <div class="clock">01:13 PM<br>Friday<br>2015-12-04</div>
      <svg class="showdesk" viewBox="0 0 16 14"><path fill="#3c7cd4" stroke="#a4bce0" d="M.5.500h15v12H.5z"/><path fill="#1c3f80" d="M1 10h14v2H1z"/><path fill="#fff" d="M3 8h3v3H3z"/></svg>
    </div>
  </aside>

  <div class="desktop">
    <div class="app c1 r1"><svg class="k"><use href="#dPc"/></svg>Komputer</div>
    <div class="app c2 r1"><svg class="k"><use href="#dIe"/></svg>rivergis.svg</div>
    <div class="app c3 r1 lnk"><svg class="k"><use href="#dImgw"/></svg><svg class="s"><use href="#short"/></svg>IMGW</div>
    <div class="app c6 r1"><svg class="k"><use href="#dTxt"/></svg>kalibracja 2d Wawa.txt</div>
    <div class="app c7 r1"><svg class="k"><use href="#dFold"/></svg>docs</div>
    <div class="app c8 r1"><svg class="k" viewBox="0 0 48 48"><use href="#dFold"/><path d="M19 14v26M29 16v26" stroke="#4fa070" stroke-width="4" stroke-dasharray="2 1.500"/></svg>straty_aad</div>
    <div class="app c1 r2"><svg class="k"><use href="#dLib"/></svg>Biblioteki</div>
    <div class="app c2 r2"><svg class="k"><use href="#dBin"/></svg>Kosz</div>
    <div class="app c3 r2"><svg class="k"><use href="#dPanel"/></svg>Tryb boski</div>
    <div class="app c8 r2"><svg class="k" viewBox="0 0 48 48"><use href="#dFold"/><path d="M29 16v26" stroke="#4fa070" stroke-width="4" stroke-dasharray="2 1.500"/><path d="M17 14h12" stroke="#888" stroke-width="3" stroke-dasharray="4 1"/><path d="M18 24l4 18" stroke="#d8b8a8"/></svg>chronione</div>
    <div class="app c10 r2"><svg class="k"><use href="#dShare"/></svg><svg class="s"><use href="#short"/></svg>skany</div>
    <div class="app c1 r3"><svg class="k"><use href="#dUser"/></svg>Pasiok Radosław</div>
    <div class="app c2 r3"><svg class="k"><use href="#dNet"/></svg>Sieć</div>
    <div class="app c8 r3"><svg class="k" viewBox="0 0 48 48"><use href="#dFold"/><path d="M19 14v26M29 16v26" stroke="#777" stroke-width="4" stroke-dasharray="1 1.500"/></svg>autorskie</div>
    <div class="app c10 r3"><svg class="k"><use href="#dShare"/></svg><svg class="s"><use href="#short"/></svg>info</div>
    <div class="app c1 r4"><svg class="k"><use href="#dApp"/></svg><svg class="s"><use href="#short"/></svg>ISOKPrzekroje</div>
    <div class="app c2 r4"><svg class="k"><use href="#dExe"/></svg><svg class="s"><use href="#short"/></svg>GRASS GIS 7.0.2RC1</div>
    <div class="app c1 r5"><svg class="k"><use href="#dMsys"/></svg><svg class="s"><use href="#short"/></svg>MSYS Shell</div>
    <div class="app c2 r5"><svg class="k"><use href="#dRas"/></svg><svg class="s"><use href="#short"/></svg>HEC-RAS 5.0 Beta<br>2015-08-21</div>
    <div class="app c3 r5"><svg class="k"><use href="#dMsys"/></svg><svg class="s"><use href="#short"/></svg>MSYS</div>
    <div class="app c1 r6"><svg class="k"><use href="#dGeo"/></svg><svg class="s"><use href="#short"/></svg>OSGeo4W Shell</div>
    <div class="app c2 r6"><svg class="k"><use href="#dDoc"/></svg><svg class="s"><use href="#short"/></svg>GRASS GIS 7.0.1RC2</div>
    <div class="app c3 r6"><svg class="k"><use href="#dGeo"/></svg><svg class="s"><use href="#short"/></svg>OSGeo_R</div>
    <div class="app c1 r7"><svg class="k"><use href="#dGeo"/></svg><svg class="s"><use href="#short"/></svg>OSGeo4W</div>
    <div class="app c2 r7"><svg class="k"><use href="#dGrass"/></svg><svg class="s"><use href="#short"/></svg>GRASS GIS 6.4.4</div>
    <div class="app c3 r7"><svg class="k" viewBox="0 0 48 48"><use href="#dGeo"/><use href="#dShield" x="26" y="25" width="18" height="22"/></svg>osgeo4w-setup-x8...</div>
    <div class="app c5 r7"><svg class="k"><use href="#qgis"/></svg><svg class="s"><use href="#short"/></svg>QGIS-dev 64-bit</div>
    <div class="app c6 r7"><svg class="k"><use href="#qgis"/></svg><svg class="s"><use href="#short"/></svg>QGIS 64-bit</div>
    <div class="app c7 r7"><svg class="k"><use href="#dBat"/></svg>OSGeo4W_64.bat</div>
    <div class="app c1 r8"><svg class="k"><use href="#dChrome"/></svg><svg class="s"><use href="#short"/></svg>Google Chrome</div>
    <div class="app c2 r8"><svg class="k"><use href="#dDoc"/></svg><svg class="s"><use href="#short"/></svg>GRASS GIS 7.0.1</div>
    <div class="app c3 r8"><svg class="k" viewBox="0 0 48 48"><use href="#dGeo"/><use href="#dShield" x="26" y="25" width="18" height="22"/></svg>osgeo4w-setup-x86...</div>
    <div class="app c4 r8"><svg class="k"><use href="#dBat"/></svg>run_osgeo.bat</div>
    <div class="app c5 r8"><svg class="k"><use href="#qgis"/></svg><svg class="s"><use href="#short"/></svg>QGIS-dev 32-bit</div>
    <div class="app c6 r8"><svg class="k"><use href="#qgis"/></svg><svg class="s"><use href="#short"/></svg>QGIS 32-bit</div>
    <div class="app c7 r8"><svg class="k"><use href="#dBat"/></svg>OSGeo4W.bat</div>
    <div class="app c8 r8"><svg class="k"><use href="#dQt"/></svg><svg class="s"><use href="#short"/></svg>designer</div>
    <div class="app c9 r8"><svg class="k"><use href="#dBat"/></svg>PyCharm.bat</div>
    <div class="app c10 r8"><svg class="k"><use href="#dTxt"/></svg>postgres_prawa_do...</div>
    <div class="app c1 r9"><svg class="k"><use href="#dGrass"/></svg><svg class="s"><use href="#short"/></svg>GRASS GIS 7.0.2RC2</div>
    <div class="app c1 r10"><svg class="k"><use href="#dFold"/></svg>OGa</div>
    <div class="app c2 r10"><svg class="k"><use href="#dFold2"/></svg><svg class="s"><use href="#short"/></svg>Raport_Etap_IV</div>
    <div class="app c1 r11"><svg class="k"><use href="#dGrass"/></svg><svg class="s"><use href="#short"/></svg>GRASS GIS 7.0.2</div>
  </div>
</section>

<section class="qgis">
  <header class="titlebar"><svg class="ti"><use href="#qgis"/></svg><b>QGIS 2.12.1-Lyon - BaldEagle2</b><span class="wb"><i class="min"></i></span><span class="wb"><i class="res"></i></span><span class="wb gap"><svg viewBox="0 0 10 10"><path d="M1.500 1.500l7 7M8.500 1.500l-7 7" stroke="#000" stroke-width="1.600"/></svg></span></header>
  <nav class="menu"><span>Project</span><span>Edit</span><span>View</span><span>Layer</span><span>Settings</span><span>Plugins</span><span>Vector</span><span>Raster</span><span>Database</span><span>Web</span><span>MMQGIS</span><span>Help</span></nav>
  <div class="tb">
    <i class="grip first"></i>
    <svg><use href="#new"/></svg><svg><use href="#open"/></svg><svg><use href="#save"/></svg><svg><use href="#saveas"/></svg><svg><use href="#comp"/></svg><svg><use href="#compm"/></svg>
    <i class="grip"></i>
    <svg class="on"><use href="#touch"/></svg><svg><use href="#pan"/></svg><svg><use href="#pansel"/></svg><svg><use href="#zin"/></svg><svg><use href="#zout"/></svg><svg><use href="#z11"/></svg><svg><use href="#zfull"/></svg><svg><use href="#zsel"/></svg><svg><use href="#zlay"/></svg><svg><use href="#zlast"/></svg><svg><use href="#znext"/></svg><svg><use href="#refresh"/></svg>
    <i class="grip"></i>
    <svg><use href="#ident"/></svg><svg><use href="#act"/></svg><i class="dd off"></i><svg><use href="#sel"/></svg><i class="dd off"></i><svg><use href="#desel"/></svg><svg><use href="#eps"/></svg><svg><use href="#table"/></svg><svg><use href="#abac"/></svg><svg><use href="#sigma"/></svg><svg><use href="#meas"/></svg><i class="dd"></i><svg><use href="#tip"/></svg><svg><use href="#bmn"/></svg><svg><use href="#bm"/></svg><svg><use href="#txt"/></svg><i class="dd"></i>
    <i class="grip"></i>
    <svg><use href="#help"/></svg><svg><use href="#what"/></svg>
    <i class="grip"></i>
    <svg><use href="#cutp"/></svg><i class="dd off"></i><svg><use href="#cutps"/></svg><svg><use href="#stitch"/></svg><svg><use href="#blobo"/></svg><svg class="faint"><use href="#blobo"/></svg><svg><use href="#blobos"/></svg><i class="dd off"></i><svg><use href="#overs"/></svg><i class="dd off"></i><svg><use href="#overs"/></svg><svg><use href="#tri"/></svg><svg><use href="#nodes"/></svg><i class="dd off"></i><svg><use href="#node"/></svg><svg><use href="#topo"/></svg><svg><use href="#topod"/></svg><svg><use href="#topo"/></svg><svg><use href="#hatch"/></svg>
  </div>
  <div class="tb two">
    <i class="grip first"></i>
    <svg><use href="#pens"/></svg><svg><use href="#pen"/></svg><svg><use href="#saveg"/></svg><svg><use href="#dots"/></svg><svg><use href="#arc"/></svg><i class="dd off"></i><svg><use href="#move"/></svg><svg><use href="#ham"/></svg><svg><use href="#trash"/></svg><svg><use href="#sciss"/></svg><svg><use href="#copy"/></svg><svg><use href="#paste"/></svg><svg><use href="#polye"/></svg><svg><use href="#nodes"/></svg>
    <i class="grip"></i><svg><use href="#solar"/></svg>
    <i class="grip"></i>
    <svg><use href="#python"/></svg><svg><use href="#earth"/></svg><svg><use href="#undo2"/></svg><i class="dd"></i><svg><use href="#prof"/></svg><svg><use href="#leaf"/></svg><svg><use href="#ref"/></svg><svg><use href="#river"/></svg><svg><use href="#snake"/></svg><svg><use href="#ident"/></svg><svg><use href="#magb"/></svg>
    <i class="grip"></i>
    <svg><use href="#rul"/></svg><svg><use href="#undo"/></svg><svg><use href="#redo"/></svg><svg><use href="#blobs"/></svg><svg><use href="#two"/></svg><svg><use href="#blobos"/></svg><svg><use href="#blob2"/></svg><svg><use href="#blobos"/></svg><svg><use href="#blobx"/></svg><svg><use href="#blob2x"/></svg><svg><use href="#resh"/></svg><svg><use href="#ring"/></svg><svg><use href="#cut2"/></svg><svg><use href="#cut2"/></svg><svg><use href="#stitch"/></svg><svg><use href="#tube"/></svg><svg><use href="#rot"/></svg>
  </div>

  <div class="work">
    <div class="vbar">
      <i class="hgrip"></i>
      <svg viewBox="0 0 24 24"><use href="#vLine"/><use href="#plusb"/></svg>
      <svg viewBox="0 0 24 24"><use href="#check"/><use href="#plusb"/></svg>
      <svg viewBox="0 0 24 24"><use href="#eleph"/><use href="#plusb"/></svg>
      <svg viewBox="0 0 24 24"><use href="#feath"/><use href="#plusb"/></svg>
      <svg viewBox="0 0 24 24"><use href="#sail"/><use href="#plusb"/></svg>
      <svg viewBox="0 0 24 24"><use href="#ora"/><use href="#plusb"/></svg>
      <svg viewBox="0 0 24 24"><use href="#globe"/><use href="#plusb"/></svg>
      <svg viewBox="0 0 24 24"><use href="#globed"/><use href="#plusb"/></svg>
      <svg viewBox="0 0 24 24"><use href="#globe" opacity=".6"/><path d="M7 6l4 11 4-11h5" fill="none" stroke="#223" stroke-width="1.500"/><use href="#plusb"/></svg>
      <svg viewBox="0 0 24 24"><use href="#comma"/><use href="#plusb"/></svg>
      <div class="vdd"><svg viewBox="0 0 24 24"><use href="#vLine"/><use href="#bStar" x="14" y="14" width="10" height="10"/></svg><i class="dd"></i></div>
      <svg viewBox="0 0 24 24"><use href="#grid"/><use href="#plusb"/></svg>
      <i class="hgrip b"></i>
      <svg class="t"><use href="#cross"/></svg><svg class="t"><use href="#topo2"/></svg><svg class="t"><use href="#sumt"/></svg>
    </div>
    <div class="panel">
      <div class="phead"><i class="hgrip"></i><span>Layers Panel</span><i class="hgrip"></i><em><i class="res"></i></em><em><svg viewBox="0 0 10 10"><path d="M1.500 1.500l7 7M8.500 1.500l-7 7" stroke="#000" stroke-width="1.500"/></svg></em></div>
      <div class="ptools">
        <svg viewBox="0 0 16 16"><use href="#clip"/><use href="#bPlus" x="9" y="9" width="7" height="7"/></svg>
        <svg viewBox="0 0 16 16"><path d="M1 8c3-5 11-5 14 0-3 4-11 4-14 0z" fill="#eef2f6" stroke="#678"/><circle cx="8" cy="7.500" r="3" fill="#34587f"/><path d="M9 13h6l-3 3z"/></svg>
        <svg viewBox="0 0 16 16"><path d="M1 2h14l-5 6v7H6V8z" fill="#5e86b4" stroke="#34587f"/><path d="M1 1h14v2H1z" fill="#e8c83c"/></svg>
        <svg viewBox="0 0 16 16"><path d="M1 1h6v4H1zM1 9h6v4H1z" fill="#f4c83c" stroke="#a80"/><path d="M9 1h4v8h3l-5 6-5-6h3z" fill="#5e8cc8" stroke="#34587f" stroke-width=".7"/></svg>
        <svg viewBox="0 0 16 16"><path d="M1 1h6v4H1zM1 9h6v4H1z" fill="#f4c83c" stroke="#a80"/><path d="M9 15h4V7h3l-5-6-5 6h3z" fill="#5e8cc8" stroke="#34587f" stroke-width=".7"/></svg>
        <svg viewBox="0 0 16 16"><path d="M1.500 1.500h12v12h-12z" fill="#eee" stroke="#888"/><path fill="#e04040" d="M8 10h8v5H8z"/><path d="M10 12.500h4" stroke="#fff" stroke-width="1.500"/></svg>
      </div>
      <div class="tree">
        <div class="row"><i class="tw"></i><svg class="c"><use href="#o"/></svg><svg class="y" viewBox="0 0 16 16"><circle cx="8" cy="7.500" r="3.300" fill="#4a0cc0" stroke="#1a1a50"/></svg><b>XSSurface</b></div>
        <div class="row"><i class="tw"></i><svg class="c"><use href="#x"/></svg><svg class="y" viewBox="0 0 16 16"><circle cx="8" cy="7.500" r="6.200" fill="#f00"/></svg><b>Endpoints</b></div>
        <div class="row"><i class="tw"></i><svg class="c"><use href="#x"/></svg><svg class="y" viewBox="0 0 16 16"><circle cx="8" cy="7.500" r="3.300" fill="#0a5cf0" stroke="#1a2a60"/></svg><b>NodesTable</b></div>
        <div class="row"><i class="tw"></i><svg class="c"><use href="#x"/></svg><svg class="y" viewBox="0 0 16 16"><path d="M0 5.500h16v6H0z" fill="#dc980c"/><path d="M0 5h16M0 11h16" stroke="#7a6838" stroke-width="2"/></svg><b>Bridges</b></div>
        <div class="row"><i class="tw"></i><svg class="c"><use href="#x"/></svg><svg class="y" viewBox="0 0 16 16"><path d="M0 8h16" stroke="#f0a0a0" stroke-width="2"/><path d="M0 7.500h16" stroke="#e03030"/></svg><b>BankLines</b></div>
        <div class="row"><i class="tw"></i><svg class="c"><use href="#x"/></svg><svg class="y" viewBox="0 0 16 16"><path d="M0 7.500h16" stroke="#14dcf0" stroke-width="1.300"/><path d="M5 4l9 3.500L5 11z" fill="#14dcf0"/></svg><b>Flowpaths</b></div>
        <div class="row"><i class="tw"></i><svg class="c"><use href="#x"/></svg><svg class="y" viewBox="0 0 16 16"><path d="M0 7.500h16" stroke="#0a14d0" stroke-width="2"/><path d="M4 3l10 4.500L4 12z" fill="#0a14d0"/></svg><b>StreamCenterlines</b></div>
        <div class="row"><i class="tw"></i><svg class="c"><use href="#x"/></svg><svg class="y" viewBox="0 0 16 16"><path d="M0 4h16v8H0z" fill="#a0a0a0"/><path d="M0 4.500h16M0 11h16" stroke="#808080" stroke-width="2"/></svg><b>InlineStructures</b></div>
        <div class="row"><i class="tw"></i><svg class="c"><use href="#x"/></svg><svg class="y" viewBox="0 0 16 16"><path d="M0 7.500h16" stroke="#9cdc94" stroke-width="3"/><path d="M0 7.500h16" stroke="#3cc03c"/></svg><b>XSCutLines</b></div>
        <div class="row"><i class="tw ex"></i><svg class="c"><use href="#xg"/></svg><svg class="y"><use href="#clip"/></svg><span>src</span></div>
        <div class="row"><i class="tw v"></i><i class="tw2"></i><svg class="c"><use href="#x"/></svg><svg class="y" viewBox="0 0 16 16"><path d="M0 7.500h16" stroke="#2020d8" stroke-width="1.500"/></svg><b>river</b></div>
        <div class="row"><i class="tw v"></i><i class="tw2"></i><svg class="c"><use href="#x"/></svg><svg class="y" viewBox="0 0 16 16"><path d="M0 7.500h16" stroke="#20a838" stroke-width="1.500"/></svg><b>cross_sections</b></div>
        <div class="row"><i class="tw v"></i><i class="tw2"></i><svg class="c"><use href="#x"/></svg><svg class="y" viewBox="0 0 16 16"><path d="M0 7.500h16" stroke="#f01818"/></svg><b>banks</b></div>
        <div class="row"><i class="tw v"></i><i class="tw2"></i><svg class="c"><use href="#x"/></svg><svg class="y" viewBox="0 0 16 16"><path d="M0 7.500h16" stroke="#50ecd8"/></svg><b>flowpaths</b></div>
        <div class="row"><i class="tw v"></i><i class="tw2"></i><svg class="c"><use href="#x"/></svg><svg class="y" viewBox="0 0 16 16"><path d="M0 7.500h16" stroke="#d838d8" stroke-width="1.400"/></svg><b>levees</b></div>
        <div class="row"><i class="tw v"></i><i class="tw2"></i><svg class="c"><use href="#x"/></svg><svg class="y" viewBox="0 0 16 16"><path d="M0 7.500h6M9 7.500h7" stroke="#000" stroke-width="3"/></svg><b>inline_struct</b></div>
        <div class="row"><i class="tw v"></i><i class="tw2"></i><svg class="c"><use href="#x"/></svg><svg class="y" viewBox="0 0 16 16"><path d="M0 7.500h16" stroke="#e82020" stroke-width="3"/><path d="M0 7.500h5M10 7.500h6" stroke="#000" stroke-width="3.500"/></svg><b>lateral</b></div>
        <div class="row"><i class="tw v"></i><i class="tw2"></i><svg class="c"><use href="#x"/></svg><svg class="y" viewBox="0 0 16 16"><path d="M0 5h16v6H0z" fill="#dc980c"/><path d="M0 4.500h16M0 11h16" stroke="#b8882c"/></svg><b>bridges</b></div>
        <div class="row"><i class="tw v"></i><i class="tw2"></i><svg class="c"><use href="#x"/></svg><svg class="y" viewBox="0 0 16 16"><path d="M.5.500h15v15H.5z" fill="#fff" stroke="#888"/><path d="M1 9L9 1M1 15L15 1M8 15l7-7" stroke="#888" stroke-width="1.400"/></svg><b>blocked</b></div>
        <div class="row"><i class="tw v"></i><i class="tw2"></i><svg class="c"><use href="#x"/></svg><svg class="y" viewBox="0 0 16 16"><path d="M.5.500h15v15H.5z" fill="#fff" stroke="#70d868"/><path d="M1 9L9 1M1 15L15 1M8 15l7-7" stroke="#50c848" stroke-width="1.800"/></svg><b>ineffective</b></div>
        <div class="row"><i class="tw v"></i><i class="tw2"></i><svg class="c"><use href="#x"/></svg><svg class="y" viewBox="0 0 16 16"><path d="M.5.500h15v15H.5z" fill="#86f0f8" stroke="#2050d0"/></svg><b>SA</b></div>
        <div class="row"><i class="tw v"></i><i class="tw2"></i><svg class="c"><use href="#x"/></svg><svg class="y" viewBox="0 0 16 16"><path d="M0 7.500h16" stroke="#f8c00c" stroke-width="2.500"/></svg><b>2d_breaklines</b></div>
        <div class="row"><i class="tw v"></i><i class="tw2"></i><svg class="c"><use href="#x"/></svg><svg class="y" viewBox="0 0 16 16"><path d="M.7.700h14.600v14.600H.7z" fill="#fff" stroke="#3c70f0" stroke-width="1.500"/></svg><b>2d_flow_areas</b></div>
        <div class="row"><i class="tw v"></i><i class="tw2 pl"></i><svg class="c"><use href="#o"/></svg><svg class="y" viewBox="0 0 24 18"><path d="M2 5c1-5 7-3 10-2s9-2 11 2-1 9-3 8-4-3-6-2-3 3-7 4-6-6-5-10z" fill="#c4c4c4" stroke="#888"/></svg><b>landuse</b></div>
        <div class="row"><i class="tw ex end"></i><svg class="c"><use href="#o"/></svg><svg class="y" viewBox="0 0 20 22"><use href="#check" width="24" height="24"/></svg><b>Terrain50.dtm_20ft</b></div>
        <div class="row"><i class="tw none"></i><i class="tw2"></i><i class="blk"></i><span>530</span></div>
        <div class="row"><i class="tw none"></i><i class="tw2 last"></i><i class="blk clear"></i><span>580</span></div>
      </div>
      <div class="tabs"><span>Browser Panel</span><span class="cur">Layers Panel</span></div>
    </div>
    <div class="split"></div>
    <div class="map">
<svg viewBox="2196 123 1642 1045">
<!-- survey sheet, lower reach -->
<g transform="translate(2180 340) scale(.35714 .42094)" class="ns">
  <path class="sa" d="M755 490L780 510 798 535 830 550 825 557 800 570 786 571 798 581 840 566 865 567 882 580 887 605 895 616 960 572 1000 540 970 535 935 530 925 518 938 497 920 490z"/>
  <path class="sa" d="M660 382L605 384 555 404 537 425 533 436 545 450 580 446 610 440 660 434z"/>
  <path class="area" d="M660 110L600 90 555 80 510 72 475 61 465 63 463 71 475 86 515 107 560 127 600 148 660 174"/>
  <path class="sa" d="M420 1183L500 1125 535 1103 542 1115 540 1153 573 1189 484 1250 430 1210z"/>
  <path class="xs" d="M42 1505L68 1532M42 1430L120 1500M42 1395L168 1468M42 1355L202 1445M50 1328L243 1418M60 1305L220 1395M80 1283L265 1402M82 1262L290 1385M137 1230L310 1375M157 1212L325 1363M177 1195L355 1345M197 1178L240 1198 377 1327M187 1157L225 1160 400 1310M205 1143L418 1300M245 1135L330 1170 460 1268M250 1128L350 1175 440 1240M277 1105L350 1140 430 1170M255 1058L330 1085 437 1168M258 1050L345 1060 440 1160M325 1030L370 1100 430 1162M335 1022L395 1060 480 1118 500 1135M350 1030L430 1100 490 1130M378 970L410 1005 470 1060 510 1130M391 905L400 925 395 960 430 990 465 1020 505 1125M404 902L408 935 400 960 455 1000 480 1040 515 1120M426 950L455 990 520 1115M470 990L490 1050 530 1110M495 945L515 1000 520 1060 533 1105M503 922L520 945 515 1000 530 1060 542 1110M525 873L545 925 560 980 570 1010 555 1070 570 1110M530 865L560 930 575 1000 575 1060 560 1110M530 898L560 960 600 1060 598 1155M540 898L570 970 620 1040 615 1155M580 857L610 920 650 1050 673 1135M598 845L640 920 690 1040 727 1102M603 838L700 955 725 1010 775 1065M620 822L720 945 807 1035M633 800L740 895 845 1003M655 785L760 870 865 965M633 766L700 780 880 957M653 740L720 760 930 920M673 735L760 780 915 923M737 730L900 850 955 885M780 712L860 790 940 900M788 690L890 790 968 885M820 675L910 765 980 877M822 670L900 740 998 858M828 672L930 745 1020 850M830 680L890 690 980 760 1042 828M832 670L940 680 1010 730 1058 808M826 668L880 675 940 670 1030 720 1070 800M892 620L1025 662 1050 740 1105 776M950 660L1050 730 1112 768M960 572L1045 640 1130 750M1025 530L1045 573M1037 522L1045 545M1045 640L1150 738M1060 645L1172 712M1080 645L1190 698M1100 645L1210 690M1120 645L1228 680M1160 645L1250 668M1195 645L1228 680M1045 700L1120 760M1045 715L1140 745M1020 765L1060 795M583 1155L595 1165M1320 650l15-3"/>
  <path class="fp" d="M42 1432L110 1375 165 1338 235 1290 300 1235 345 1180 358 1120 380 1060 420 1008 470 988 530 978 600 985 660 975 720 935 800 865 850 815 920 755 980 710 1045 670 1085 645M42 1475L120 1405 200 1360 290 1315 360 1250 420 1180 470 1130 540 1106 600 1112 680 1100 740 1065 800 1020 860 960 950 885 1070 800 1100 745 1150 700 1210 647"/>
  <path class="bank" d="M42 1447L100 1388 178 1335 235 1305 265 1268 295 1252 330 1205 370 1150 385 1110 382 1075 380 1058 400 1040 428 1022 435 1008 460 1012 525 990 560 1005 620 1030 680 1015 715 990 720 960 760 920 800 880 845 830 880 805 880 795 915 780 940 755 980 720 1010 712 1050 728 1100 705 1150 680 1180 646"/>
  <path class="bank" d="M42 1458L100 1400 175 1340 210 1330 255 1328 300 1290 345 1245 380 1210 408 1180 402 1140 430 1138 450 1100 470 1070 490 1077 505 1072 540 1108 580 1115 600 1128 620 1132 680 1110 740 1075 800 1025 855 960 940 895 955 872 1010 845 1070 798 1075 765 1055 735 1105 708 1150 688 1185 648"/>
  <path class="stream" d="M42 1452L100 1395 150 1360 180 1338 240 1305 285 1280 310 1258 330 1215 355 1190 375 1155 400 1130 412 1090 440 1050 470 1028 500 1026 540 1045 600 1060 660 1055 740 1020 795 965 830 915 880 870 950 805 1000 765 1050 730 1100 705"/>
  <path class="stream in" d="M42 1452L100 1395 150 1360 180 1338 240 1305 285 1280 310 1258 330 1215 355 1190 375 1155 400 1130 412 1090 440 1050 470 1028 500 1026 540 1045 600 1060 660 1055 740 1020 795 965 830 915 880 870 950 805 1000 765 1050 730 1100 705"/>
  <path class="red4" d="M42 1452L62 1437M85 1412L105 1395M130 1375L155 1358M1050 728L1100 705 1150 682 1182 646"/>
</g>
<!-- survey sheet, upper reach -->
<g transform="translate(3180 0) scale(.42094 .33333)" class="ns">
  <path class="sa" d="M343 570L358 548 350 530 380 555 440 560 480 545 525 540 525 575 480 600 400 628 343 626z"/>
  <path class="area" d="M156 680L200 655 250 637 343 628M320 515L355 545"/>
  <path class="xs" d="M185 490V545M198 655L208 690M232 640L245 690M255 634L262 720M265 660C250 690 255 740 273 750M266 665L290 750M315 627L312 737M332 627L335 725M345 690L355 718M375 627L395 690M315 465V495M330 480L362 495M405 540V560M463 530V545M520 560L540 583M495 580L510 600M560 490H580M580 530L590 550M430 640L440 660M375 530L365 570M200 705L245 797M185 715L227 803M165 740L207 803M156 765L180 812M156 790L167 825M475 600L492 615M480 595L495 608"/>
  <path class="fp" d="M156 700L230 655 330 655 400 655M156 765L260 725 350 710 400 690 480 620 560 565 590 540M170 518L320 505M205 525L320 490"/>
  <path class="bank" d="M156 500L235 498 290 487 320 480 350 488 370 535 400 552 440 548 465 538 530 545 575 505M156 538L245 532 320 515 350 520 375 560 440 562 480 555 530 560M190 700C200 660 225 665 275 668L320 690 370 688 420 650 480 585 515 565 570 510M195 715C205 680 225 678 275 680L320 698 375 695 420 665 485 592"/>
  <path class="stream" d="M156 518L235 518 320 498 345 505 372 545 410 558 450 552 510 548M192 708C202 670 225 671 275 674L320 694 372 691 420 658 482 588"/>
  <path class="fl" d="M180 518L205 490 216 503 200 520 216 530 190 540z"/>
  <path class="struct" d="M228 470L243 468 250 550 236 553z"/>
  <path class="bridge" d="M415 616L477 608V628L417 634zM156 715L170 738 206 800 192 808 156 742z"/>
  <path d="M480 597L495 602 490 615z" fill="#3cc03c"/>
</g>
<g class="top"><path class="area" d="M3106 147l4-7 18-3 8 2"/><path class="xs" d="M3132 131l18-8M3160 145l20-12M3166 132l4 15M3192 146l10-2"/><path class="bank" d="M3136 123l14 24M3144 123l14 10"/><path class="stream" d="M3138 123l24 22"/></g>
<circle cx="3423" cy="172" r="7" fill="#f00"/><circle cx="3396" cy="186" r="7.500" fill="#f00"/>
<g class="lab">
<text transform="translate(2532 576) rotate(42)">81330</text>
<text transform="translate(2502 592) rotate(19)">82254</text>
<text transform="translate(2481 614) rotate(9)">83781</text>
<text transform="translate(2521 615) rotate(25)">82783</text>
<text transform="translate(2466 631) rotate(44)">86887</text>
<text transform="translate(2449 641) rotate(41)">88041</text>
<text transform="translate(2419 643) rotate(36)">89040</text>
<text transform="translate(2534 642) rotate(43)">84171</text>
<text transform="translate(2500 651) rotate(41)">86208</text>
<text transform="translate(2460 681) rotate(36)">89382</text>
<text transform="translate(2449 694) rotate(38)">90606</text>
<text transform="translate(2403 686) rotate(46)">93247</text>
<text transform="translate(2436 710) rotate(37)">92089</text>
<text transform="translate(2375 702) rotate(58)">97765</text>
<text transform="translate(2419 733) rotate(69)">95525</text>
<text transform="translate(2402 736) rotate(74)">97362</text>
<text transform="translate(2388 744) rotate(84)">98828</text>
<text transform="translate(2366 737) rotate(78)">100014</text>
<text transform="translate(2334 717) rotate(70)">101193</text>
<text transform="translate(2380 793) rotate(80)">99448</text>
<text transform="translate(2313 767) rotate(43)">103483</text>
<text transform="translate(2281 773) rotate(33)">105056</text>
<text transform="translate(2285 795) rotate(35)">105655</text>
<text transform="translate(2272 808) rotate(30)">106586</text>
<text transform="translate(2253 819) rotate(32)">108404</text>
<text transform="translate(2310 839) rotate(31)">107152</text>
<text transform="translate(2289 858) rotate(43)">109149</text>
<text transform="translate(2236 851) rotate(41)">111390</text>
<text transform="translate(2216 863) rotate(38)">112753</text>
<text transform="translate(2230 900) rotate(41)">114127</text>
<text transform="translate(2211 914) rotate(42)">115702</text>
<text transform="translate(2202 934) rotate(43)">117125</text>
<text transform="translate(2197 955) rotate(52)">118681</text>
<text transform="translate(3246 155) rotate(89)">10101</text>
<text transform="translate(3292 152) rotate(84)">8368</text>
<text transform="translate(3323 149) rotate(85)">6233</text>
<text transform="translate(3361 171) rotate(89)">3142</text>
<text transform="translate(3385 167) rotate(87)">1433</text>
<text transform="translate(3403 170) rotate(56)">1869</text>
<text transform="translate(3431 168) rotate(60)">1</text>
<text transform="translate(3347 202) rotate(65)">6581</text>
<text transform="translate(3329 210) rotate(85)">8347</text>
<text transform="translate(3299 213) rotate(88)">10684-</text>
<text transform="translate(3271 228) rotate(56)">12808</text>
<text transform="translate(3241 224) rotate(54)">14088</text>
<text transform="translate(3126 132) rotate(-50)">10</text>
<text transform="translate(3152 147) rotate(-66)">658</text>
<text transform="translate(3177 147) rotate(-66)">12</text>
</g>
<g class="big"><text x="3435" y="161">4</text><text x="3408" y="208">2</text><text x="3137" y="147">3</text></g>
</svg>
    </div>
  </div>

  <footer class="status">
    <span class="ext"><svg viewBox="0 0 16 18"><path d="M4 2c4-2 5 4 3 6s3 3 3 6-6 3-5-1M3 6c2 5 6 3 8 8M9 6l5-4" fill="none" stroke="#222" stroke-width="1.800"/></svg></span>
    <span class="l1">Coordinate:</span><span class="inp coord">1984107,342165</span>
    <span class="l2">Scale</span><span class="inp scale">1:78,824<em><i class="dd"></i></em></span>
    <span class="l3">Rotation:</span><span class="inp rotn">0.0<em class="sp"><i></i><i class="dn"></i></em></span>
    <svg class="rc"><use href="#x"/></svg><span class="l4">Render</span>
    <svg class="gl" viewBox="0 0 24 24"><circle cx="12" cy="12" r="11" fill="#555" stroke="#333"/><path d="M2 12h20M12 2v20M12 1c-7 6-7 16 0 22M12 1c7 6 7 16 0 22" fill="none" stroke="#ccc" stroke-width="1.500"/></svg><span class="l5">EPSG:102728 (OTF)</span>
    <svg class="bub" viewBox="0 0 16 16"><path d="M8 1c4 0 7 2 7 6s-2 5-3 5l1 3-5-2c-5 0-7-2-7-6s3-6 7-6z" fill="#666"/><path d="M4 7h8" stroke="#eee" stroke-width="1.500" stroke-dasharray="1.500 1.500"/></svg>
  </footer>
</section>
</main>

<section class="win river">
  <header class="titlebar"><svg class="ti"><use href="#river"/></svg><b>RiverGIS</b><span class="wb"><i class="min"></i></span><span class="wb"><i class="max"></i></span><span class="wb gap"><svg viewBox="0 0 10 10"><path d="M1.500 1.500l7 7M8.500 1.500l-7 7" stroke="#000" stroke-width="1.600"/></svg></span></header>
  <nav class="menu"><span>Database</span><span>Settings</span><span>RAS Geometry</span><span>Help</span></nav>
  <div class="tb ra"><svg><use href="#rTopo"/></svg><svg><use href="#rAbc"/></svg><svg><use href="#r123"/></svg><svg><use href="#rCup"/></svg><svg><use href="#rPer"/></svg><svg><use href="#rProf"/></svg><svg><use href="#rAll"/></svg><i class="grip"></i><svg><use href="#rRas"/></svg></div>
  <div class="tb rb"><svg><use href="#rSplit"/></svg><i class="grip"></i><svg><use href="#rArea"/></svg><svg><use href="#rVol"/></svg><i class="grip"></i><svg viewBox="0 0 24 24"><use href="#rMesh"/><use href="#bStar" x="15" y="15" width="9" height="9"/></svg><svg viewBox="0 0 24 24"><use href="#rMesh"/><use href="#bPlus" x="15" y="15" width="9" height="9"/></svg><svg viewBox="0 0 24 24"><use href="#rMesh"/><use href="#save" x="15" y="15" width="9" height="9"/></svg></div>
  <div class="schema"><span>Schema:</span><span class="combo">bald_eagle3<em><i class="dd"></i></em></span></div>
  <div class="log"><p>&nbsp;</p><p>folder)</p><p>ordinate Reference System, CRS).</p><p>&nbsp;</p><p class="in">ayer &gt; Add layer &gt; Add PostGIS layers...</p></div>
  <div class="proj"><span>Projection</span><span class="combo"><span class="clipt">Selected CRS (EPSG:102728, NAD_1983_StatePlane</span><em><i class="dd"></i></em></span><span class="btn"><svg viewBox="0 0 24 24"><use href="#globe"/><path fill="#d8b838" d="M12 12h12v12H12z"/><path d="M14 22l7-7" stroke="#fff" stroke-width="2"/></svg></span></div>
</section>

<section class="win dialog">
  <header class="titlebar act"><svg class="ti"><use href="#river"/></svg><b>RiverGIS Options</b><span class="wb">?</span><span class="wb gap"><svg viewBox="0 0 10 10"><path d="M1.500 1.500l7 7M8.500 1.500l-7 7" stroke="#000" stroke-width="1.600"/></svg></span></header>
  <div class="dbody">
    <ul class="cats"><li class="g"><svg><use href="#river"/></svg>General</li><li><svg><use href="#db"/></svg>River Database</li><li class="cur"><svg><use href="#dtm"/></svg>DTM</li></ul>
    <i class="vs"></i>
    <div class="grp">
      <span class="leg">Rasters selection</span>
      <label class="all"><svg><use href="#o"/></svg>Select all</label>
      <div class="ras"><svg><use href="#x"/></svg>Terrain50.dtm_20ft</div>
      <span class="chunk">Chunk size:</span>
      <span class="inp spin">0<em class="sp"><i></i><i class="dn"></i></em></span>
    </div>
  </div>
  <div class="btns"><span class="btn def">OK</span><span class="btn">Cancel</span></div>
</section>
<svg class="pointer" viewBox="0 0 12 20"><path d="M.5.500v16l3.700-3.600L6.500 18.500l2.300-1-2.300-5.300h5z" fill="#fff" stroke="#000"/></svg>
</body>
</html>
```
FILE: styles.css
```css
* { box-sizing: border-box; }
body { margin: 0; width: 3840px; height: 1200px; overflow: hidden; background: #464646; color: #000;
  font: 11px/13px "DejaVu Sans Condensed", "DejaVu Sans", sans-serif; font-stretch: condensed; letter-spacing: -.1px; position: relative; white-space: nowrap; }
.defs { position: absolute; width: 0; height: 0; }
svg { display: block; flex: none; overflow: visible; }
.logo { font-family: "DejaVu Sans", sans-serif; font-weight: bold; letter-spacing: 0; }
.sans { font-family: "DejaVu Sans", sans-serif; letter-spacing: 0; }
.serif { font-family: "Liberation Serif", serif; font-weight: bold; letter-spacing: 0; }
.serifb { font-family: "DejaVu Serif", serif; font-weight: bold; letter-spacing: 0; }
.it { font-style: italic; }
i, em { font-style: normal; display: block; flex: none; }
.screens { display: flex; height: 1200px; }
.left-screen { width: 1920px; display: flex; }

/* taskbar */
.taskbar { width: 77px; background: #d4d0c8; border-right: 1px solid #808080; display: flex; flex-direction: column; padding: 2px 2px 3px; }
.start { width: 51px; height: 38px; padding: 0 0 0 1px; display: flex; align-items: center; gap: 1px; font: bold 12px/14px "DejaVu Sans Condensed", "DejaVu Sans", sans-serif; font-stretch: condensed; letter-spacing: -.8px; background: #d4d0c8; border: 1px solid; border-color: #fff #404040 #404040 #fff; box-shadow: inset -1px -1px #808080; }
.start svg { width: 15px; height: 15px; }
.tasks { flex: 1; padding: 3px 0 0 4px; }
.task { width: 68px; height: 37px; display: flex; align-items: center; gap: 3px; padding-left: 3px; font-size: 12px; background: #d4d0c8; border: 1px solid; border-color: #fff #404040 #404040 #fff; box-shadow: inset -1px -1px #808080; letter-spacing: -.4px; }
.task svg { width: 32px; height: 32px; }
.s1 { margin-top: 1px; }
.s3 { margin-top: 3px; }
.s5 { margin-top: 5px; }
.sync { width: 32px; height: 32px; margin: 6px 0 0 18px; }
.active { background: #fff; font-weight: bold; border-color: #404040 #fff #fff #404040; box-shadow: inset 1px 1px #808080, inset -1px -1px #d4d0c8; }
.tray { width: 72px; height: 162px; border: 1px solid; border-color: #808080 #fff #fff #808080; display: flex; flex-direction: column; align-items: center; padding-top: 4px; }
.tray-icons { display: grid; grid-template-columns: 16px 16px; gap: 8px; align-self: flex-end; margin-right: 7px; }
.tray-icons svg { width: 16px; height: 16px; }
.clock { text-align: center; line-height: 15px; margin-top: 6px; letter-spacing: -.2px; }
.showdesk { width: 16px; height: 14px; margin-top: 4px; }

/* desktop grid */
.desktop { flex: 1; display: grid; grid-template-columns: repeat(10, 115px); grid-template-rows: repeat(11, 109px); color: #fff; }
.app { position: relative; padding-top: 7px; text-align: center; text-shadow: 1px 1px 1px #222; }
.k { width: 48px; height: 48px; margin: 0 auto 4px 34px; }
.s { position: absolute; left: 34px; top: 41px; width: 15px; height: 15px; }
.c1 { grid-column: 1; } .c2 { grid-column: 2; } .c3 { grid-column: 3; } .c4 { grid-column: 4; } .c5 { grid-column: 5; }
.c6 { grid-column: 6; } .c7 { grid-column: 7; } .c8 { grid-column: 8; } .c9 { grid-column: 9; } .c10 { grid-column: 10; }
.r1 { grid-row: 1; } .r2 { grid-row: 2; } .r3 { grid-row: 3; } .r4 { grid-row: 4; } .r5 { grid-row: 5; } .r6 { grid-row: 6; }
.r7 { grid-row: 7; } .r8 { grid-row: 8; } .r9 { grid-row: 9; } .r10 { grid-row: 10; } .r11 { grid-row: 11; }

/* window chrome */
.qgis { width: 1920px; display: flex; flex-direction: column; background: #d4d0c8; }
.titlebar { height: 18px; display: flex; align-items: center; background: linear-gradient(90deg, #808080, #c0c0c0); color: #d4d0c8; padding: 0 2px; letter-spacing: 0; }
.titlebar.act { background: linear-gradient(90deg, #0a246a, #a6caf0); color: #fff; }
.titlebar b { flex: 1; }
.ti { width: 16px; height: 16px; margin-right: 2px; }
.wb { width: 16px; height: 14px; background: #d4d0c8; border: 1px solid; border-color: #fff #404040 #404040 #fff; box-shadow: inset -1px -1px #808080; color: #000; display: flex; align-items: center; justify-content: center; font-weight: bold; }
.wb svg { width: 10px; height: 9px; }
.wb.gap { margin-left: 2px; }
.min { width: 6px; height: 2px; background: #000; margin: 7px 3px 0 0; }
.max { width: 9px; height: 9px; border: 1px solid #000; border-top-width: 2px; }
.res { width: 6px; height: 6px; border: 1px solid #000; border-top-width: 2px; margin: 3px 2px 0 0; box-shadow: 2px -3px 0 -1px #d4d0c8, 2px -3px #000; }
.menu { display: flex; align-items: center; height: 24px; padding: 2px 0 0 9px; border-bottom: 1px solid #a8a59d; }
.qgis .menu { gap: 15px; }
.tb { display: flex; align-items: center; height: 39px; border-bottom: 1px solid #a8a59d; border-top: 1px solid #dedbd5; }
.tb svg { width: 24px; height: 24px; margin: 0 5.500px; }
.tb svg.on { width: 33px; height: 32px; margin: 0 1px; padding: 4px; background: #bab7b0; border: 1px solid #888; border-radius: 2px; }
.tb.two { border-bottom: 2px solid #a8a59d; height: 40px; }
.grip { width: 14px; height: 30px; background: radial-gradient(circle, #fff 1.200px, transparent 1.500px) 8px 0/4px 4px repeat-y, radial-gradient(circle, #fff 1.200px, transparent 1.500px) 10px 2px/4px 4px repeat-y; }
.grip.first { width: 11px; background-position: 6px 0, 8px 2px; }
.tb .first + svg { margin-left: 6px; }
.dd { width: 12.500px; height: 6px; background: #000; clip-path: polygon(10% 0, 90% 0, 50% 100%); }
.tb .dd { margin-top: -2px; clip-path: polygon(14% 0, 86% 0, 50% 100%); }
.dd.off { background: #908d86; }
.faint { opacity: .7; }

/* work area */
.work { flex: 1; display: flex; min-height: 0; }
.vbar { width: 51px; border-right: 1px solid #a8a59d; display: flex; flex-direction: column; align-items: flex-start; padding: 7px 0 0 14px; gap: 10px; }
.vbar svg { width: 24px; height: 24px; }
.hgrip { height: 5px; background: radial-gradient(circle, #fff 1.200px, transparent 1.500px) 0 -1px/4px 4px repeat-x, radial-gradient(circle, #fff 1.200px, transparent 1.500px) 2px 1px/4px 4px repeat-x; }
.vbar > .hgrip { width: 42px; margin: -3px 0 -4px -9px; }
.vbar > .hgrip.b { margin: 12px 0 2px -9px; }
.vdd { display: flex; align-items: center; margin-left: -6px; gap: 4px; }
.vdd .dd { width: 10px; height: 5px; }
.vbar .t { margin: 0 0 -2px 2px; }
.panel { width: 216px; display: flex; flex-direction: column; padding-left: 2px; }
.phead { height: 18px; display: flex; align-items: center; padding: 2px 0 0 2px; }
.phead .hgrip { width: 53px; }
.phead span { margin: 0 8px 0 9px; width: 54px; letter-spacing: -.7px; }
.phead em { width: 14px; height: 14px; margin-left: 1px; border: 1px solid #555; border-radius: 3px; display: flex; align-items: center; justify-content: center; background: #dedbd5; }
.phead em:first-of-type { margin-left: 4px; }
.phead em svg { width: 9px; height: 9px; }
.ptools { height: 39px; display: flex; align-items: center; padding: 0 0 4px 7px; gap: 11px; }
.ptools svg { width: 16px; height: 16px; }
.tree { width: 214px; flex: 1; background: #fff; border: 2px solid #a09d95; border-radius: 3px; padding-left: 0; letter-spacing: -.3px; }
.row { height: 16px; display: flex; align-items: center; }
.c { width: 12px; height: 12px; }
.y { width: 16px; height: 16px; margin: 0 6px 0 7px; }
.tw { width: 22px; height: 16px; background: repeating-linear-gradient(#888 0 1px, #fff 1px 2px) 9px 0/1px 16px no-repeat, repeating-linear-gradient(90deg, #888 0 1px, #fff 1px 2px) 9px 7px/10px 1px no-repeat; }
.tw.v { background-size: 1px 16px, 0 0; }
.tw.none { background: none; }
.tw2 { width: 20px; height: 16px; background: repeating-linear-gradient(#888 0 1px, #fff 1px 2px) 7px 0/1px 16px no-repeat, repeating-linear-gradient(90deg, #888 0 1px, #fff 1px 2px) 7px 7px/10px 1px no-repeat; }
.tw2.last { background-size: 1px 8px, 10px 1px; }
.tw.ex::before, .tw2.pl::before { content: "−"; display: block; width: 9px; height: 9px; margin: 3px 0 0 5px; border: 1px solid #777; background: #fff; font: 9px/7px "DejaVu Sans", sans-serif; text-align: center; }
.tw2.pl::before { content: "+"; margin-left: 3px; }
.tw.ex, .tw2.pl { overflow: hidden; display: flow-root; }
.tw.end { background-size: 1px 8px, 10px 1px; }
.blk { width: 16px; height: 16px; background: #000; margin: 0 6px 0 0; }
.blk.clear { background: none; }
.tabs { height: 22px; display: flex; align-items: flex-start; border-top: 2px solid #a8a59d; margin-top: 1px; }
.tabs span { height: 18px; padding: 4px 0 0 10px; width: 91px; border: 1px solid #908d86; border-top: 0; border-radius: 0 0 3px 3px; background: linear-gradient(#d8d5ce, #bebbb3); }
.tabs .cur { height: 21px; width: 84px; padding-top: 6px; background: #d4d0c8; margin-top: -1px; }
.split { width: 7px; background: radial-gradient(circle, #fff 1.200px, transparent 1.600px) 1px 347px/4px 5px repeat-y; clip-path: inset(347px 0 354px 0); }
.map { width: 1645px; background: #fff; border: 2px solid #a09d95; border-right-width: 1px; height: 1049px; overflow: hidden; }
.map > svg { width: 1642px; height: 1045px; overflow: hidden; }
.ns * { vector-effect: non-scaling-stroke; }
.map path { fill: none; }
.map .sa { fill: #86f0f6; stroke: #0a1cc8; stroke-width: 1.500; }
.map .area { stroke: #3c6cf4; stroke-width: 2; }
.xs { stroke: #3cc032; stroke-width: 2; }
.fp { stroke: #14e4f4; stroke-width: 1.200; }
.bank { stroke: #e81414; stroke-width: 1.500; }
.stream { stroke: #0a28c8; stroke-width: 2.600; }
.stream.in { stroke: #18a0f0; stroke-width: 1; }
.red4 { stroke: #d81c2c; stroke-width: 3; }
.map .fl { fill: #14e4f4; }
.map .struct { fill: #a0a0a0; stroke: #333; }
.map .bridge { fill: #dc980c; stroke: #222; }
.lab text { font-size: 12.600px; letter-spacing: 0; dominant-baseline: central; fill: #000; stroke: #fff; stroke-width: 3px; stroke-linejoin: round; paint-order: stroke; }
.big text { font: bold 15px "DejaVu Sans", sans-serif; fill: #fff; stroke: #1414a0; stroke-width: 2.500px; paint-order: stroke; text-anchor: middle; }

/* status bar */
.status { height: 31px; display: flex; align-items: center; padding: 2px 0 0 983px; }
.inp, .combo { border: 1px solid #a09d95; border-radius: 2px; background: #fff; display: flex; align-items: center; }
.inp em, .combo em { margin-left: auto; width: 16px; height: 100%; border-left: 1px solid #a09d95; background: #d4d0c8; display: flex; align-items: center; justify-content: center; flex-direction: column; }
.inp em .dd, .combo em .dd { width: 8px; height: 4px; }
.sp i { width: 8px; height: 4px; background: #000; clip-path: polygon(50% 0, 100% 100%, 0 100%); margin: 1px 0 3px; }
.sp i.dn { clip-path: polygon(0 0, 100% 0, 50% 100%); margin: 3px 0 1px; }
.ext { width: 20px; height: 24px; border: 1px solid #888; border-radius: 3px; background: #dcd9d3; padding: 2px; }
.ext svg { width: 15px; height: 18px; }
.l1 { margin-left: 8px; width: 67px; }
.coord { width: 300px; height: 20px; justify-content: center; }
.l2 { margin-left: 8px; width: 38px; }
.scale { width: 88px; height: 20px; padding-left: 5px; }
.l3 { margin-left: 9px; width: 56px; }
.rotn { width: 97px; height: 24px; padding-left: 3px; }
.rc { width: 12px; height: 12px; margin-left: 8px; }
.l4 { margin-left: 4px; width: 55px; }
.gl { width: 15px; height: 16px; margin-right: 4px; }
.l5 { width: 118px; }
.bub { width: 16px; height: 16px; }

/* floating windows */
.win { position: absolute; background: #d4d0c8; border: 1px solid; border-color: #d4d0c8 #404040 #404040 #d4d0c8; box-shadow: inset 1px 1px #fff, inset -1px -1px #808080; padding: 3px; }
.river { left: 2553px; top: 147px; width: 693px; height: 465px; display: flex; flex-direction: column; }
.river .menu { gap: 15px; height: 24px; padding-top: 3px; }
.river .tb { justify-content: flex-start; height: 38.500px; }
.river .ra { padding-left: 354px; }
.river .rb { padding-left: 341px; }
.rb svg:first-child { margin-right: 9px; }
.schema { height: 39px; display: flex; align-items: center; justify-content: flex-end; gap: 7px; padding: 1px 9px 0 0; }
.combo { background: linear-gradient(#dcd9d2, #c4c1b9); padding-left: 3px; }
.schema .combo { width: 200px; height: 20px; }
.log { margin: 0 9px 6px 10px; height: 261px; background: #fff; border: 2px solid #a09d95; border-radius: 3px; padding: 42px 0 0 343px; }
.log p { margin: 0; }
.log .in { padding-left: 1px; }
.proj { display: flex; align-items: center; justify-content: flex-end; padding-right: 9px; height: 24px; }
.proj .combo { width: 274px; height: 24px; margin-left: 6px; }
.clipt { width: 250px; overflow: hidden; }
.btn { border: 1px solid #a09d95; border-radius: 3px; background: linear-gradient(#dcd9d2, #c4c1b9); display: flex; align-items: center; justify-content: center; }
.proj .btn { width: 26px; height: 24px; }
.proj .btn svg { width: 15px; height: 15px; }
.dialog { left: 2410px; top: 198px; width: 503px; height: 350px; }
.dbody { display: flex; padding: 12px 20px 0 11px; height: 290px; }
.cats { margin: 0; padding: 1px; list-style: none; width: 150px; height: 267px; background: #fff; border: 1px solid #a09d95; border-radius: 3px; box-shadow: inset 0 0 0 1px #c4c1b9; }
.cats li { height: 24px; display: flex; align-items: center; gap: 6px; padding-left: 4px; }
.cats svg { width: 22px; height: 22px; }
.cats .g { height: 33px; gap: 5px; padding-left: 3px; }
.cats .g svg { width: 32px; height: 32px; }
.cats .cur { background: #d4d0c8; }
.vs { width: 15px; height: 84px; margin-top: 89px; background: radial-gradient(circle, #fff 1.200px, transparent 1.600px) 2px 0/4px 5px repeat-y; }
.grp { width: 299px; height: 243px; margin-top: 15px; border: 1px solid #a09d95; border-radius: 3px; padding: 0 10px; display: flex; flex-direction: column; align-items: flex-start; }
.leg { margin: -7px 0 0 -5px; padding: 0 3px 0 2px; background: #d4d0c8; }
.all { display: flex; align-items: center; gap: 5px; margin-top: 12px; height: 15px; }
.all svg, .ras svg { width: 12px; height: 12px; }
.ras { width: 277px; height: 147px; margin-top: 8px; background: #fff; border: 1px solid #0a246a; box-shadow: inset 0 0 0 1px #3c5488; border-radius: 2px; display: flex; gap: 6px; align-items: flex-start; padding: 2px 0 0 4px; }
.chunk { margin: 7px 0 5px; }
.spin { width: 277px; height: 19px; padding-left: 4px; }
.btns { display: flex; justify-content: flex-end; gap: 10px; padding-right: 11px; }
.btns .btn { width: 75px; height: 23px; }
.btns .def { border-color: #555; }
.pointer { position: absolute; left: 2809px; top: 158px; width: 12px; height: 20px; }
```
